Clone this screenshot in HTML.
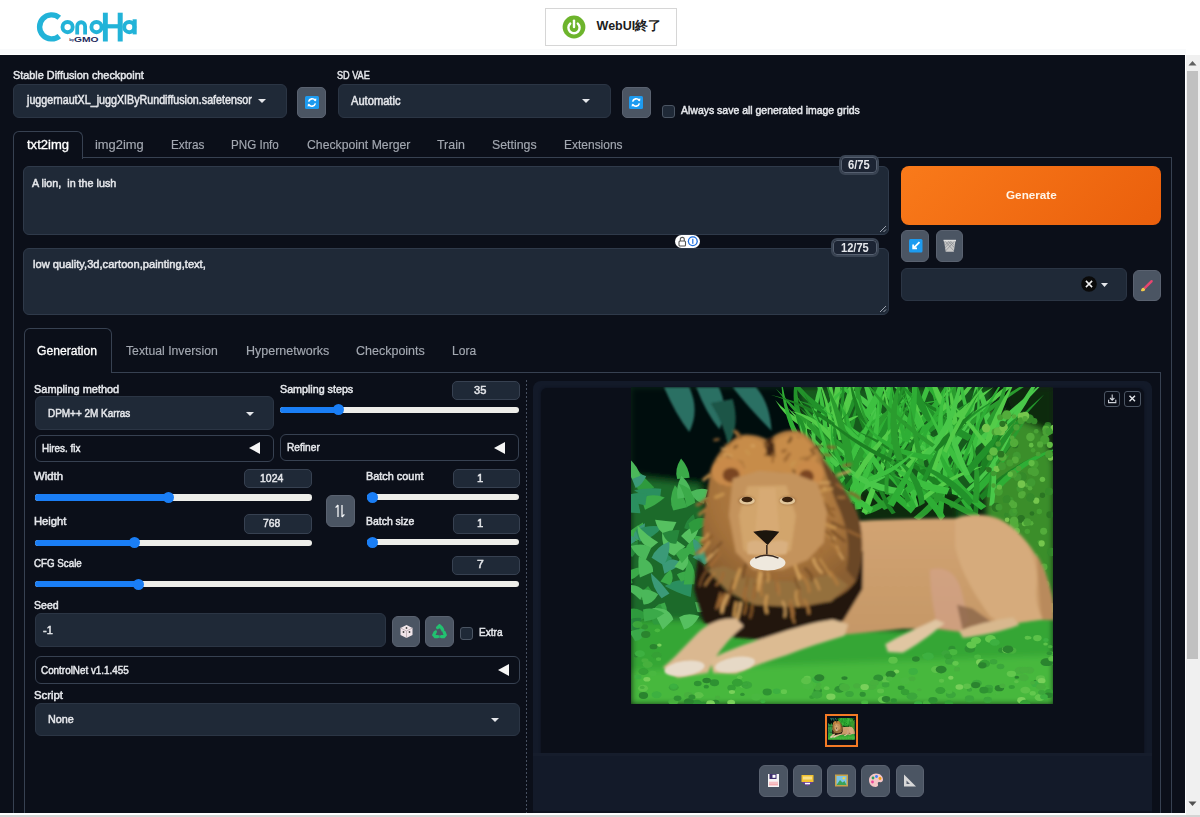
<!DOCTYPE html>
<html><head><meta charset="utf-8"><style>
html,body{margin:0;padding:0;width:1200px;height:817px;overflow:hidden;background:#fff;font-family:"Liberation Sans",sans-serif;}
</style></head><body>
<div style="position:absolute;left:0px;top:0px;width:1200px;height:55px;background:#ffffff;border-radius:0px;"></div>
<div style="position:absolute;left:0px;top:49px;width:1186px;height:5px;background:#f9fafb;border-radius:0px;"></div>
<svg style="position:absolute;left:30px;top:8px;" width="115" height="40" viewBox="0 0 115 40">
<g fill="none" stroke="#22b3d8">
<path d="M 29.3 9.7 A 12 12 0 1 0 29.3 28.1" stroke-width="5.4"/>
<circle cx="37.6" cy="19.1" r="5.1" stroke-width="3.9"/>
<circle cx="66.5" cy="19.1" r="5.1" stroke-width="3.9"/>
<circle cx="99.3" cy="19.1" r="5.1" stroke-width="3.9"/>
</g>
<g fill="#22b3d8">
<path d="M 45.3 26.4 L 45.3 18.2 A 5.85 5.85 0 0 1 57 18.2 L 57 26.4 L 53.2 26.4 L 53.2 18.4 A 2.05 2.05 0 0 0 49.1 18.4 L 49.1 26.4 Z"/>
<rect x="72.9" y="4.7" width="4.9" height="28.8"/>
<rect x="77" y="16.2" width="11" height="4.2"/>
<rect x="87.7" y="4.7" width="5" height="28.8"/>
<rect x="102.6" y="11.3" width="4.1" height="15.1"/>
</g>
<text x="39.3" y="33.4" font-family="Liberation Sans" font-size="4.2" font-weight="700" fill="#1d2a5c">by</text>
<text x="44" y="33.6" font-family="Liberation Sans" font-size="6.8" font-weight="700" fill="#1d2a5c" textLength="24.5" lengthAdjust="spacingAndGlyphs">GMO</text>
</svg>
<div style="position:absolute;left:545px;top:8px;width:132px;height:38px;background:#ffffff;border:1px solid #d6d6d6;box-sizing:border-box;border-radius:0px;"></div>
<svg style="position:absolute;left:562px;top:15px;" width="24" height="24" viewBox="0 0 24 24"><circle cx="12" cy="12" r="11.4" fill="#6db42c"/>
<path d="M 8.2 8.6 A 5.6 5.6 0 1 0 15.8 8.6" fill="none" stroke="#fff" stroke-width="2.4" stroke-linecap="round"/>
<line x1="12" y1="5.6" x2="12" y2="12" stroke="#fff" stroke-width="2.4" stroke-linecap="round"/></svg>
<div style="position:absolute;left:0px;top:55px;width:1185px;height:758px;background:#0b0f19;border-radius:0px;"></div>
<div style="position:absolute;left:1185px;top:55px;width:1px;height:758px;background:#ffffff;border-radius:0px;"></div>
<div style="position:absolute;left:1186px;top:55px;width:14px;height:762px;background:#f0f0f0;border-radius:0px;"></div>
<div style="position:absolute;left:1187px;top:71px;width:11px;height:588px;background:#c1c1c1;border-radius:0px;"></div>
<svg style="position:absolute;left:1187px;top:58px;" width="11" height="10" viewBox="0 0 11 10"><path d="M1.5 7.5 L5.5 3 L9.5 7.5 Z" fill="#606060"/></svg>
<svg style="position:absolute;left:1187px;top:799px;" width="11" height="10" viewBox="0 0 11 10"><path d="M1.5 2.5 L5.5 7 L9.5 2.5 Z" fill="#505050"/></svg>
<div style="position:absolute;left:0px;top:813px;width:1186px;height:2px;background:#ffffff;border-radius:0px;"></div>
<div style="position:absolute;left:0px;top:815px;width:1200px;height:2px;background:#d4d4d4;border-radius:0px;"></div>
<div style="position:absolute;left:12.5px;top:84px;width:274px;height:34px;background:#1f2937;border:1px solid #2b3544;box-sizing:border-box;border-radius:6px;"></div>
<svg style="position:absolute;left:258.0px;top:99.0px;" width="8" height="4" viewBox="0 0 8 4"><path d="M0 0 L8 0 L4.0 4 Z" fill="#e5e7eb"/></svg>
<div style="position:absolute;left:297px;top:87px;width:29px;height:31px;background:#4b5563;border:1px solid #5a6270;box-sizing:border-box;border-radius:5px;"></div>
<svg style="position:absolute;left:304.5px;top:95.5px;" width="14" height="13" viewBox="0 0 14 13"><rect x="0" y="0" width="14" height="13" rx="1.5" fill="#1d9bf0"/>
<path d="M 3.6 5.6 A 3.6 3.6 0 0 1 10.2 4.6" fill="none" stroke="#fff" stroke-width="1.6"/>
<path d="M 10.4 7.4 A 3.6 3.6 0 0 1 3.8 8.4" fill="none" stroke="#fff" stroke-width="1.6"/>
<path d="M 8.6 3.2 L 11.4 2.6 L 11 5.6 Z" fill="#fff"/>
<path d="M 5.4 9.8 L 2.6 10.4 L 3 7.4 Z" fill="#fff"/></svg>
<div style="position:absolute;left:337.5px;top:84px;width:273px;height:34px;background:#1f2937;border:1px solid #2b3544;box-sizing:border-box;border-radius:6px;"></div>
<svg style="position:absolute;left:582.0px;top:99.0px;" width="8" height="4" viewBox="0 0 8 4"><path d="M0 0 L8 0 L4.0 4 Z" fill="#e5e7eb"/></svg>
<div style="position:absolute;left:622px;top:87px;width:28.5px;height:31px;background:#4b5563;border:1px solid #5a6270;box-sizing:border-box;border-radius:5px;"></div>
<svg style="position:absolute;left:629.3px;top:95.5px;" width="14" height="13" viewBox="0 0 14 13"><rect x="0" y="0" width="14" height="13" rx="1.5" fill="#1d9bf0"/>
<path d="M 3.6 5.6 A 3.6 3.6 0 0 1 10.2 4.6" fill="none" stroke="#fff" stroke-width="1.6"/>
<path d="M 10.4 7.4 A 3.6 3.6 0 0 1 3.8 8.4" fill="none" stroke="#fff" stroke-width="1.6"/>
<path d="M 8.6 3.2 L 11.4 2.6 L 11 5.6 Z" fill="#fff"/>
<path d="M 5.4 9.8 L 2.6 10.4 L 3 7.4 Z" fill="#fff"/></svg>
<div style="position:absolute;left:662px;top:105px;width:13px;height:13px;background:#1f2937;border:1px solid #4b5563;box-sizing:border-box;border-radius:3px;"></div>
<div style="position:absolute;left:13px;top:157px;width:1159px;height:1px;background:#374151;border-radius:0px;"></div>
<div style="position:absolute;left:12.5px;top:131px;width:70px;height:28px;background:#0b0f19;border:1px solid #374151;box-sizing:border-box;border-radius:6px;border-bottom:none;border-bottom-left-radius:0;border-bottom-right-radius:0;"></div>
<div style="position:absolute;left:13px;top:157px;width:1px;height:656px;background:#374151;border-radius:0px;"></div>
<div style="position:absolute;left:1171px;top:157px;width:1px;height:656px;background:#374151;border-radius:0px;"></div>
<div style="position:absolute;left:23.3px;top:166px;width:865.5px;height:69px;background:#1f2937;border:1px solid #2f3a4a;box-sizing:border-box;border-radius:6px;"></div>
<svg style="position:absolute;left:876.8px;top:223px;" width="10" height="10" viewBox="0 0 10 10"><path d="M9 3 L3 9 M9 6.5 L6.5 9" stroke="#9ca3af" stroke-width="1"/></svg>
<div style="position:absolute;left:23.3px;top:247.5px;width:865.5px;height:67.3px;background:#1f2937;border:1px solid #2f3a4a;box-sizing:border-box;border-radius:6px;"></div>
<svg style="position:absolute;left:876.8px;top:302.8px;" width="10" height="10" viewBox="0 0 10 10"><path d="M9 3 L3 9 M9 6.5 L6.5 9" stroke="#9ca3af" stroke-width="1"/></svg>
<div style="position:absolute;left:838.8px;top:155.3px;width:40.5px;height:19.7px;background:transparent;border:2px solid #3a4453;box-sizing:border-box;border-radius:6px;"></div>
<div style="position:absolute;left:840.8px;top:157.3px;width:36.5px;height:15.7px;background:#1c2433;border:1px solid #566070;box-sizing:border-box;border-radius:4px;"></div>
<div style="position:absolute;left:830.5px;top:237.5px;width:48.8px;height:19.8px;background:transparent;border:2px solid #3a4453;box-sizing:border-box;border-radius:6px;"></div>
<div style="position:absolute;left:832.5px;top:239.5px;width:44.8px;height:15.8px;background:#1c2433;border:1px solid #566070;box-sizing:border-box;border-radius:4px;"></div>
<div style="position:absolute;left:674.5px;top:235px;width:25.5px;height:12.5px;background:#ffffff;border-radius:6.5px;"></div>
<svg style="position:absolute;left:674.5px;top:235px;" width="26" height="13" viewBox="0 0 26 13"><rect x="4" y="6" width="6.5" height="5" rx="1" fill="none" stroke="#555" stroke-width="1.1"/>
<path d="M5.3 6 V4.4 A2 2 0 0 1 9.3 4.4 V6" fill="none" stroke="#555" stroke-width="1.1"/>
<circle cx="17.8" cy="6.25" r="5" fill="#1d6fe0"/><circle cx="17.8" cy="6.25" r="3.7" fill="#fff"/><rect x="17.2" y="3.8" width="1.2" height="5" fill="#1d6fe0"/></svg>
<div style="position:absolute;left:900.6px;top:166px;width:260.7px;height:58.5px;background:linear-gradient(135deg,#f97a1a,#ea5f0c);border-radius:8px;"></div>
<div style="position:absolute;left:901px;top:230.3px;width:28px;height:31.3px;background:#4b5563;border:1px solid #5a6270;box-sizing:border-box;border-radius:6px;"></div>
<svg style="position:absolute;left:909px;top:239px;" width="13.5" height="13.5" viewBox="0 0 13.5 13.5"><rect width="13.5" height="13.5" rx="1.5" fill="#1d9bf0"/><path d="M10.5 3.2 L4.8 8.8 M4.2 5.6 V9.4 H8" fill="none" stroke="#fff" stroke-width="1.8"/></svg>
<div style="position:absolute;left:935.8px;top:230.3px;width:27.5px;height:31.3px;background:#4b5563;border:1px solid #5a6270;box-sizing:border-box;border-radius:6px;"></div>
<svg style="position:absolute;left:943px;top:239px;" width="13.5" height="13.5" viewBox="0 0 13.5 13.5"><path d="M1 1.5 H12.5 L10.8 12.8 H2.7 Z" fill="#c8c8c8"/>
<path d="M1.5 1.5 L11 12 M12 1.5 L2.5 12 M4.5 1.5 L11.8 9 M9 1.5 L1.8 9 M7 1.5 L2.2 6 M6.5 1.5 L11.3 6" stroke="#7b7f86" stroke-width="0.6"/>
<rect x="0.5" y="0.8" width="12.5" height="1.5" fill="#e0e0e0"/></svg>
<div style="position:absolute;left:901px;top:267.5px;width:225.5px;height:33px;background:#1f2937;border:1px solid #2b3544;box-sizing:border-box;border-radius:6px;"></div>
<svg style="position:absolute;left:1081px;top:276px;" width="16" height="16" viewBox="0 0 16 16"><circle cx="8" cy="8" r="7.8" fill="#0a0a0a"/><path d="M4.9 4.9 L11.1 11.1 M11.1 4.9 L4.9 11.1" stroke="#f0f0f0" stroke-width="1.5"/></svg>
<svg style="position:absolute;left:1100.5px;top:283.0px;" width="7" height="4" viewBox="0 0 7 4"><path d="M0 0 L7 0 L3.5 4 Z" fill="#e5e7eb"/></svg>
<div style="position:absolute;left:1132.5px;top:270px;width:28.5px;height:30.5px;background:#4b5563;border:1px solid #5a6270;box-sizing:border-box;border-radius:6px;"></div>
<svg style="position:absolute;left:1138px;top:277px;" width="17" height="17" viewBox="0 0 17 17"><path d="M5.5 10.5 L12.8 3.2 A1.3 1.3 0 0 1 14.6 5 L7.3 12.3 Z" fill="#e8456f"/><path d="M3 14 C3 11.5 4.5 10.2 5.8 10.8 L7 12 C7.6 13.3 6.2 15 3 14 Z" fill="#f2c94c"/></svg>
<div style="position:absolute;left:24px;top:372px;width:1137px;height:1px;background:#374151;border-radius:0px;"></div>
<div style="position:absolute;left:23.5px;top:328px;width:88px;height:45px;background:#0b0f19;border:1px solid #374151;box-sizing:border-box;border-radius:6px;border-bottom:none;border-bottom-left-radius:0;border-bottom-right-radius:0;"></div>
<div style="position:absolute;left:24px;top:372px;width:1px;height:441px;background:#374151;border-radius:0px;"></div>
<div style="position:absolute;left:1160px;top:372px;width:1px;height:441px;background:#374151;border-radius:0px;"></div>
<div style="position:absolute;left:526px;top:380px;width:1px;height:433px;background:repeating-linear-gradient(to bottom,#475060 0 2px,transparent 2px 4px);"></div>
<div style="position:absolute;left:34.6px;top:396.4px;width:239.7px;height:33.8px;background:#1f2937;border:1px solid #2b3544;box-sizing:border-box;border-radius:6px;"></div>
<svg style="position:absolute;left:246.0px;top:411.79999999999995px;" width="8" height="4" viewBox="0 0 8 4"><path d="M0 0 L8 0 L4.0 4 Z" fill="#e5e7eb"/></svg>
<div style="position:absolute;left:34.6px;top:434.6px;width:239.7px;height:27px;background:transparent;border:1px solid #374151;box-sizing:border-box;border-radius:6px;"></div>
<svg style="position:absolute;left:249px;top:442.1px;" width="11" height="12" viewBox="0 0 11 12"><path d="M11 0 L11 12 L0 6 Z" fill="#f5f5f5"/></svg>
<div style="position:absolute;left:452.4px;top:381px;width:67.9px;height:18.5px;background:#1f2937;border:1px solid #374151;box-sizing:border-box;border-radius:5px;"></div>
<div style="position:absolute;left:280.4px;top:406.5px;width:238.80000000000007px;height:6.4px;background:#eeeeea;border-radius:3.2px;"></div>
<div style="position:absolute;left:280.4px;top:406.5px;width:58.5px;height:6.4px;background:#1a7ef5;border-radius:3.2px;"></div>
<div style="position:absolute;left:333.29999999999995px;top:404.09999999999997px;width:11.2px;height:11.2px;background:#1a7ef5;border-radius:6px;"></div>
<div style="position:absolute;left:280.4px;top:434px;width:239px;height:27.2px;background:transparent;border:1px solid #374151;box-sizing:border-box;border-radius:6px;"></div>
<svg style="position:absolute;left:494.3px;top:441.6px;" width="11" height="12" viewBox="0 0 11 12"><path d="M11 0 L11 12 L0 6 Z" fill="#f5f5f5"/></svg>
<div style="position:absolute;left:243.9px;top:469px;width:68px;height:19.3px;background:#1f2937;border:1px solid #374151;box-sizing:border-box;border-radius:5px;"></div>
<div style="position:absolute;left:34.7px;top:494.2px;width:277.2px;height:6.4px;background:#eeeeea;border-radius:3.2px;"></div>
<div style="position:absolute;left:34.7px;top:494.2px;width:134.10000000000002px;height:6.4px;background:#1a7ef5;border-radius:3.2px;"></div>
<div style="position:absolute;left:163.20000000000002px;top:491.79999999999995px;width:11.2px;height:11.2px;background:#1a7ef5;border-radius:6px;"></div>
<div style="position:absolute;left:243.9px;top:513.8px;width:68px;height:19.8px;background:#1f2937;border:1px solid #374151;box-sizing:border-box;border-radius:5px;"></div>
<div style="position:absolute;left:34.7px;top:539.5px;width:277.2px;height:6.4px;background:#eeeeea;border-radius:3.2px;"></div>
<div style="position:absolute;left:34.7px;top:539.5px;width:100.10000000000001px;height:6.4px;background:#1a7ef5;border-radius:3.2px;"></div>
<div style="position:absolute;left:129.20000000000002px;top:537.1px;width:11.2px;height:11.2px;background:#1a7ef5;border-radius:6px;"></div>
<div style="position:absolute;left:325.5px;top:495.4px;width:29px;height:31.2px;background:#4b5563;border:1px solid #5a6270;box-sizing:border-box;border-radius:6px;"></div>
<svg style="position:absolute;left:333px;top:503px;" width="14" height="16" viewBox="0 0 14 16"><path d="M5 2 V14 M5 2 L2.6 4.6 M9 14 V2 M9 14 L11.4 11.4" stroke="#f3f4f6" stroke-width="1.3" fill="none"/></svg>
<div style="position:absolute;left:452.7px;top:469px;width:67.1px;height:19.2px;background:#1f2937;border:1px solid #374151;box-sizing:border-box;border-radius:5px;"></div>
<div style="position:absolute;left:367.2px;top:494.0px;width:151.50000000000006px;height:6.4px;background:#eeeeea;border-radius:3.2px;"></div>
<div style="position:absolute;left:367.2px;top:494.0px;width:5.300000000000011px;height:6.4px;background:#1a7ef5;border-radius:3.2px;"></div>
<div style="position:absolute;left:366.9px;top:491.59999999999997px;width:11.2px;height:11.2px;background:#1a7ef5;border-radius:6px;"></div>
<div style="position:absolute;left:452.7px;top:514px;width:67.1px;height:19.5px;background:#1f2937;border:1px solid #374151;box-sizing:border-box;border-radius:5px;"></div>
<div style="position:absolute;left:367.2px;top:539.0px;width:151.50000000000006px;height:6.4px;background:#eeeeea;border-radius:3.2px;"></div>
<div style="position:absolute;left:367.2px;top:539.0px;width:5.300000000000011px;height:6.4px;background:#1a7ef5;border-radius:3.2px;"></div>
<div style="position:absolute;left:366.9px;top:536.6px;width:11.2px;height:11.2px;background:#1a7ef5;border-radius:6px;"></div>
<div style="position:absolute;left:452.3px;top:555.5px;width:67.4px;height:19.3px;background:#1f2937;border:1px solid #374151;box-sizing:border-box;border-radius:5px;"></div>
<div style="position:absolute;left:34.7px;top:581.0px;width:484.09999999999997px;height:6.4px;background:#eeeeea;border-radius:3.2px;"></div>
<div style="position:absolute;left:34.7px;top:581.0px;width:103.99999999999999px;height:6.4px;background:#1a7ef5;border-radius:3.2px;"></div>
<div style="position:absolute;left:133.1px;top:578.6px;width:11.2px;height:11.2px;background:#1a7ef5;border-radius:6px;"></div>
<div style="position:absolute;left:34.6px;top:613.3px;width:351px;height:33.8px;background:#1f2937;border:1px solid #2b3544;box-sizing:border-box;border-radius:6px;"></div>
<div style="position:absolute;left:392px;top:615.8px;width:28px;height:31.2px;background:#4b5563;border:1px solid #5a6270;box-sizing:border-box;border-radius:6px;"></div>
<svg style="position:absolute;left:398.5px;top:624px;" width="15" height="15" viewBox="0 0 15 15"><path d="M7.5 1 L13.5 4 V11 L7.5 14 L1.5 11 V4 Z" fill="#f1e6ea"/><path d="M1.5 4 L7.5 7 L13.5 4 M7.5 7 V14" stroke="#b9a9b0" stroke-width="0.8" fill="none"/><circle cx="4.5" cy="8" r="0.9" fill="#444"/><circle cx="10.5" cy="8" r="0.9" fill="#444"/><circle cx="7.5" cy="4" r="0.9" fill="#444"/></svg>
<div style="position:absolute;left:425.1px;top:615.8px;width:29px;height:31.2px;background:#4b5563;border:1px solid #5a6270;box-sizing:border-box;border-radius:6px;"></div>
<svg style="position:absolute;left:432px;top:624px;" width="15" height="15" viewBox="0 0 15 15"><g fill="none" stroke="#22c170" stroke-width="3.2" stroke-linecap="round"><path d="M5.6 3.6 L7.5 1.8 L9.4 3.6 L10.6 5.6"/><path d="M12.2 8.4 L13.2 11 L11.8 12.6 L9.4 12.6"/><path d="M5.6 12.6 L3.2 12.6 L1.8 11 L3 8.4"/></g><path d="M11.2 4.4 L12.8 7.8 L9.4 7.4 Z M7.6 11 L7.6 14.2 L5 12.6 Z M4 5.4 L2 8.6 L5.2 8.2 Z" fill="#22c170"/></svg>
<div style="position:absolute;left:459.5px;top:626.8px;width:13.4px;height:13.3px;background:#1f2937;border:1px solid #4b5563;box-sizing:border-box;border-radius:3px;"></div>
<div style="position:absolute;left:34.6px;top:656.2px;width:485px;height:27.5px;background:transparent;border:1px solid #374151;box-sizing:border-box;border-radius:6px;"></div>
<svg style="position:absolute;left:498.2px;top:663.95px;" width="11" height="12" viewBox="0 0 11 12"><path d="M11 0 L11 12 L0 6 Z" fill="#f5f5f5"/></svg>
<div style="position:absolute;left:34.6px;top:702.5px;width:485px;height:33.8px;background:#1f2937;border:1px solid #2b3544;box-sizing:border-box;border-radius:6px;"></div>
<svg style="position:absolute;left:491.3px;top:717.9px;" width="8" height="4" viewBox="0 0 8 4"><path d="M0 0 L8 0 L4.0 4 Z" fill="#e5e7eb"/></svg>
<div style="position:absolute;left:532.5px;top:381px;width:619px;height:432px;background:#131a29;border-radius:8px;border-bottom-left-radius:0;border-bottom-right-radius:0;"></div>
<div style="position:absolute;left:532.5px;top:810.5px;width:619px;height:2.5px;background:#0e1320;border-radius:0px;"></div>
<div style="position:absolute;left:540.5px;top:387.5px;width:603.5px;height:365px;background:#0b0f19;border-radius:6px;border-bottom-left-radius:0;border-bottom-right-radius:0;box-shadow:0 0 2px 1px #0f1522;"></div>
<div style="position:absolute;left:532.5px;top:752.5px;width:619px;height:3px;background:#161d2c;border-radius:0px;"></div>
<svg style="position:absolute;left:630.7px;top:386.7px" width="422.7" height="317.5" viewBox="0 0 423 317"><defs>
<filter id="b6" x="-10%" y="-10%" width="120%" height="120%"><feGaussianBlur stdDeviation="8"/></filter>
<filter id="b3" x="-10%" y="-10%" width="120%" height="120%"><feGaussianBlur stdDeviation="3"/></filter>
<filter id="b5" x="-10%" y="-10%" width="120%" height="120%"><feGaussianBlur stdDeviation="3.5"/></filter>
<filter id="b2" x="-10%" y="-10%" width="120%" height="120%"><feGaussianBlur stdDeviation="1.5"/></filter>
<linearGradient id="bd" x1="0" y1="0" x2="0" y2="1"><stop offset="0" stop-color="#d2a473"/><stop offset="1" stop-color="#c59766"/></linearGradient>
<radialGradient id="mane" cx="0.5" cy="0.3" r="0.65"><stop offset="0" stop-color="#bf8748"/><stop offset="0.7" stop-color="#a4713a"/><stop offset="1" stop-color="#8a5e30"/></radialGradient>
</defs>
<g transform="scale(0.38843)">
<rect width="1089" height="817" fill="#0b1f0e"/>
<g filter="url(#b6)">
<path d="M0 0 H430 L440 300 L200 250 L0 220 Z" fill="#06110a"/>
<path d="M430 0 H930 L925 250 L860 340 L600 335 L480 260 Z" fill="#155a1a"/>
<path d="M920 60 L1060 90 L1089 200 V560 L1000 520 L915 330 Z" fill="#3a8e2c"/>
<path d="M960 0 H1089 V120 L990 80 Z" fill="#0e2a10"/>
<path d="M0 230 L180 250 L200 420 L175 620 L0 640 Z" fill="#1d6a2c"/>
<path d="M0 600 L300 600 L700 625 L1089 570 V817 H0 Z" fill="#34a634"/>
<path d="M0 730 L1089 690 V817 H0 Z" fill="#46b83e"/>
<path d="M570 260 L850 270 L840 345 L590 345 Z" fill="#0a2a0e"/>
</g>
<g fill="#2c7064" filter="url(#b3)">
<path d="M85 0 Q115 70 150 115 Q178 60 150 0 Z"/>
<path d="M168 0 Q195 70 228 108 Q252 50 226 0 Z"/>
<path d="M262 0 Q305 55 362 112 Q358 40 322 0 Z"/>
<path d="M205 40 Q240 95 250 150 Q282 100 262 30 Z" fill="#1e5446"/>
</g>
<g filter="url(#b2)">
<path d="M86 480 Q110 469 133 453 Q102 434 79 450 Z" fill="#3a9a78"/>
<path d="M168 435 Q170 414 169 391 Q138 401 141 425 Z" fill="#3aaa48"/>
<path d="M158 503 Q126 486 87 512 Q120 531 154 540 Z" fill="#2c8f5e"/>
<path d="M129 501 Q147 496 155 473 Q133 472 118 482 Z" fill="#3aaa48"/>
<path d="M162 371 Q170 351 161 327 Q141 343 137 363 Z" fill="#27863a"/>
<path d="M140 410 Q110 390 81 368 Q75 419 111 434 Z" fill="#56c060"/>
<path d="M58 549 Q60 531 44 512 Q22 530 27 548 Z" fill="#2f9a3c"/>
<path d="M165 403 Q199 415 228 384 Q196 389 162 381 Z" fill="#3aaa48"/>
<path d="M13 397 Q36 384 31 348 Q7 361 -12 378 Z" fill="#3aaa48"/>
<path d="M60 258 Q35 233 11 207 Q-1 253 31 275 Z" fill="#2f9a3c"/>
<path d="M151 233 Q150 207 129 183 Q111 211 119 236 Z" fill="#3aaa48"/>
<path d="M34 526 Q14 500 -24 514 Q3 526 24 548 Z" fill="#4cb85a"/>
<path d="M-8 612 Q19 605 46 589 Q15 560 -11 574 Z" fill="#2f9a3c"/>
<path d="M88 597 Q99 581 87 554 Q58 561 54 581 Z" fill="#3aaa48"/>
<path d="M-2 496 Q21 488 34 462 Q7 464 -14 476 Z" fill="#3aaa48"/>
<path d="M57 475 Q58 447 20 436 Q17 465 23 490 Z" fill="#4cb85a"/>
<path d="M30 397 Q36 375 36 350 Q7 363 6 387 Z" fill="#3a9a78"/>
<path d="M32 559 Q54 561 70 533 Q46 517 25 522 Z" fill="#4cb85a"/>
<path d="M78 261 Q44 258 8 265 Q40 289 75 286 Z" fill="#2c8f5e"/>
<path d="M95 610 Q88 583 75 557 Q43 584 58 611 Z" fill="#2f9a3c"/>
<path d="M100 509 Q114 494 102 469 Q85 483 76 500 Z" fill="#3aaa48"/>
<path d="M14 393 Q3 378 -22 377 Q-19 400 -5 412 Z" fill="#3a9a78"/>
<path d="M22 397 Q56 390 82 359 Q43 353 12 367 Z" fill="#2c8f5e"/>
<path d="M189 425 Q184 402 159 388 Q160 413 169 434 Z" fill="#3a9a78"/>
<path d="M99 531 Q78 502 51 478 Q54 517 79 543 Z" fill="#3a9a78"/>
<path d="M13 636 Q27 622 26 594 Q-6 591 -15 611 Z" fill="#27863a"/>
<path d="M137 624 Q161 618 176 589 Q145 579 124 592 Z" fill="#56c060"/>
<path d="M4 504 Q2 486 -20 475 Q-24 496 -18 512 Z" fill="#2f9a3c"/>
<path d="M150 403 Q172 385 177 352 Q146 362 129 383 Z" fill="#56c060"/>
<path d="M106 440 Q91 427 75 415 Q68 442 87 452 Z" fill="#2c8f5e"/>
<path d="M164 507 Q171 473 147 441 Q138 475 136 508 Z" fill="#3aaa48"/>
<path d="M36 315 Q63 305 87 284 Q53 271 27 287 Z" fill="#3aaa48"/>
<path d="M144 309 Q138 279 113 252 Q95 288 109 317 Z" fill="#3aaa48"/>
<path d="M117 347 Q90 344 62 341 Q72 382 102 379 Z" fill="#56c060"/>
<path d="M11 654 Q32 652 36 621 Q14 622 -5 629 Z" fill="#3aaa48"/>
<path d="M84 458 Q101 433 99 397 Q64 411 53 439 Z" fill="#3a9a78"/>
<path d="M12 259 Q29 252 39 229 Q13 215 -1 228 Z" fill="#3a9a78"/>
<path d="M134 472 Q155 455 144 422 Q127 442 112 462 Z" fill="#56c060"/>
<path d="M41 275 Q13 267 -18 281 Q8 301 37 304 Z" fill="#2c8f5e"/>
<path d="M125 368 Q104 366 81 375 Q94 407 117 402 Z" fill="#27863a"/>
<path d="M3 437 Q18 423 18 396 Q-7 403 -18 420 Z" fill="#27863a"/>
<path d="M200 308 Q234 308 247 270 Q220 281 188 285 Z" fill="#4cb85a"/>
<path d="M156 282 Q157 253 130 228 Q114 259 120 287 Z" fill="#4cb85a"/>
<path d="M131 453 Q147 434 163 416 Q130 407 116 430 Z" fill="#3aaa48"/>
<path d="M171 578 Q193 585 206 556 Q185 555 165 553 Z" fill="#4cb85a"/>
<path d="M156 378 Q184 357 214 346 Q174 325 148 351 Z" fill="#2f9a3c"/>
<path d="M70 399 Q39 381 17 356 Q16 401 50 415 Z" fill="#56c060"/>
<path d="M165 297 Q165 260 123 248 Q139 275 143 309 Z" fill="#3aaa48"/>
<path d="M190 457 Q216 444 201 405 Q179 421 159 438 Z" fill="#3a9a78"/>
<path d="M24 324 Q22 302 11 278 Q-18 298 -9 322 Z" fill="#2c8f5e"/>
<path d="M109 598 Q100 566 55 569 Q67 597 82 624 Z" fill="#56c060"/>
<path d="M34 603 Q61 601 86 582 Q57 564 31 572 Z" fill="#3aaa48"/>
<path d="M24 228 Q17 202 -7 182 Q-8 212 3 236 Z" fill="#4cb85a"/>
<path d="M198 264 Q179 256 154 269 Q166 298 188 299 Z" fill="#4cb85a"/>
<path d="M52 413 Q30 399 -1 409 Q14 438 38 445 Z" fill="#4cb85a"/>
</g>
<g filter="url(#b2)">
<path d="M515 103 Q428 96 372 33 Q418 113 507 117 Z" fill="#52cc48"/>
<path d="M556 90 Q592 12 621 -69 Q580 6 546 85 Z" fill="#22922a"/>
<path d="M699 134 Q783 56 857 -31 Q774 47 691 126 Z" fill="#52cc48"/>
<path d="M672 104 Q690 -7 624 -101 Q674 -4 658 106 Z" fill="#3cc040"/>
<path d="M718 81 Q632 12 583 -84 Q616 24 704 91 Z" fill="#1e8024"/>
<path d="M813 164 Q865 92 942 52 Q852 76 803 151 Z" fill="#22922a"/>
<path d="M831 77 Q701 17 605 -88 Q689 32 821 89 Z" fill="#3cc040"/>
<path d="M511 159 Q505 28 459 -96 Q492 30 500 161 Z" fill="#3cc040"/>
<path d="M844 73 Q826 -20 863 -104 Q805 -23 827 70 Z" fill="#2a9c2e"/>
<path d="M706 151 Q705 31 698 -89 Q686 31 690 151 Z" fill="#3cc040"/>
<path d="M476 153 Q469 5 541 -122 Q457 2 466 150 Z" fill="#48c84a"/>
<path d="M559 167 Q663 57 811 31 Q656 42 553 154 Z" fill="#2fae34"/>
<path d="M784 64 Q708 12 634 -44 Q698 24 776 75 Z" fill="#48c84a"/>
<path d="M748 64 Q791 -65 860 -182 Q777 -72 737 59 Z" fill="#3cc040"/>
<path d="M638 172 Q679 115 663 46 Q668 113 630 170 Z" fill="#2a9c2e"/>
<path d="M842 150 Q901 46 1003 -14 Q889 33 832 139 Z" fill="#48c84a"/>
<path d="M741 105 Q807 51 825 -35 Q791 40 728 97 Z" fill="#2fae34"/>
<path d="M847 113 Q949 20 1058 -66 Q940 8 839 104 Z" fill="#52cc48"/>
<path d="M550 80 Q417 23 374 -113 Q405 33 540 89 Z" fill="#22922a"/>
<path d="M633 138 Q634 58 669 -12 Q620 55 622 135 Z" fill="#52cc48"/>
<path d="M655 76 Q583 -2 481 -38 Q573 12 647 88 Z" fill="#48c84a"/>
<path d="M821 173 Q718 124 618 70 Q712 135 815 183 Z" fill="#52cc48"/>
<path d="M703 153 Q743 108 733 45 Q730 103 692 150 Z" fill="#22922a"/>
<path d="M722 127 Q834 103 907 12 Q825 88 715 115 Z" fill="#2fae34"/>
<path d="M501 135 Q558 101 561 32 Q545 93 491 128 Z" fill="#3cc040"/>
<path d="M868 126 Q892 34 903 -62 Q877 30 856 124 Z" fill="#48c84a"/>
<path d="M749 100 Q712 -14 631 -103 Q694 -4 733 108 Z" fill="#1e8024"/>
<path d="M816 66 Q903 -8 938 -118 Q893 -15 807 60 Z" fill="#52cc48"/>
<path d="M651 172 Q662 109 706 66 Q644 98 636 163 Z" fill="#52cc48"/>
<path d="M890 111 Q824 -33 870 -183 Q813 -32 881 112 Z" fill="#3cc040"/>
<path d="M846 164 Q702 102 630 -34 Q690 115 836 174 Z" fill="#3cc040"/>
<path d="M757 111 Q715 69 679 21 Q705 77 749 118 Z" fill="#1e8024"/>
<path d="M532 111 Q590 6 577 -116 Q575 3 519 109 Z" fill="#52cc48"/>
<path d="M713 185 Q820 121 921 48 Q811 107 706 174 Z" fill="#3cc040"/>
<path d="M610 126 Q672 73 719 5 Q659 60 600 116 Z" fill="#1e8024"/>
<path d="M744 140 Q794 85 816 13 Q780 76 732 132 Z" fill="#3cc040"/>
<path d="M558 144 Q582 92 584 35 Q567 88 546 140 Z" fill="#22922a"/>
<path d="M511 121 Q450 98 404 53 Q443 108 505 129 Z" fill="#52cc48"/>
<path d="M929 116 Q930 23 864 -47 Q912 29 914 121 Z" fill="#48c84a"/>
<path d="M501 79 Q570 -12 641 -102 Q556 -24 489 69 Z" fill="#2a9c2e"/>
<path d="M818 100 Q761 59 712 9 Q746 74 805 113 Z" fill="#2a9c2e"/>
<path d="M722 155 Q798 97 873 37 Q788 83 714 144 Z" fill="#22922a"/>
<path d="M620 124 Q583 20 578 -90 Q565 22 605 126 Z" fill="#2a9c2e"/>
<path d="M831 65 Q760 -30 682 -119 Q745 -19 818 74 Z" fill="#2fae34"/>
<path d="M824 105 Q876 49 933 -0 Q864 35 814 93 Z" fill="#52cc48"/>
<path d="M524 146 Q538 5 558 -136 Q518 2 507 144 Z" fill="#52cc48"/>
<path d="M845 93 Q788 17 763 -74 Q769 25 830 100 Z" fill="#52cc48"/>
<path d="M638 101 Q632 6 573 -72 Q613 12 622 106 Z" fill="#48c84a"/>
<path d="M637 103 Q580 3 477 -51 Q571 12 629 111 Z" fill="#3cc040"/>
<path d="M876 89 Q775 58 691 -4 Q769 69 872 98 Z" fill="#1e8024"/>
<path d="M478 160 Q415 59 431 -56 Q396 62 463 162 Z" fill="#22922a"/>
<path d="M503 154 Q537 96 597 69 Q526 82 494 143 Z" fill="#52cc48"/>
<path d="M849 113 Q893 22 936 -70 Q880 15 838 108 Z" fill="#1e8024"/>
<path d="M631 154 Q621 85 574 31 Q606 91 618 159 Z" fill="#48c84a"/>
<path d="M799 169 Q708 51 738 -92 Q694 54 787 171 Z" fill="#52cc48"/>
<path d="M644 70 Q659 -38 620 -141 Q643 -37 631 71 Z" fill="#2fae34"/>
<path d="M842 110 Q840 40 812 -25 Q827 42 832 112 Z" fill="#52cc48"/>
<path d="M790 96 Q721 6 729 -105 Q700 11 773 101 Z" fill="#22922a"/>
<path d="M613 77 Q687 -34 688 -170 Q668 -41 597 71 Z" fill="#3cc040"/>
<path d="M472 121 Q507 41 573 -15 Q497 33 464 114 Z" fill="#3cc040"/>
<path d="M579 280 Q589 204 602 129 Q569 200 562 276 Z" fill="#3cc040"/>
<path d="M894 328 Q903 180 968 49 Q887 176 882 324 Z" fill="#1e8024"/>
<path d="M883 319 Q819 229 802 121 Q804 234 871 323 Z" fill="#2fae34"/>
<path d="M490 333 Q568 279 598 185 Q553 267 477 323 Z" fill="#1e8024"/>
<path d="M834 138 Q938 43 1058 -30 Q929 30 826 127 Z" fill="#2a9c2e"/>
<path d="M842 279 Q836 205 867 141 Q817 201 827 275 Z" fill="#3cc040"/>
<path d="M891 294 Q801 206 701 130 Q792 216 883 302 Z" fill="#1e8024"/>
<path d="M533 285 Q392 271 291 175 Q387 282 529 294 Z" fill="#2a9c2e"/>
<path d="M632 256 Q705 120 642 -23 Q689 119 619 255 Z" fill="#52cc48"/>
<path d="M741 306 Q707 178 624 74 Q695 184 731 311 Z" fill="#48c84a"/>
<path d="M830 212 Q765 137 664 122 Q758 148 825 221 Z" fill="#48c84a"/>
<path d="M611 182 Q522 162 469 92 Q512 177 602 195 Z" fill="#48c84a"/>
<path d="M503 154 Q585 58 582 -71 Q565 50 487 148 Z" fill="#52cc48"/>
<path d="M773 121 Q695 16 700 -113 Q681 20 762 124 Z" fill="#3cc040"/>
<path d="M826 312 Q924 235 995 131 Q916 227 819 305 Z" fill="#1e8024"/>
<path d="M905 291 Q997 200 1116 152 Q987 184 897 279 Z" fill="#1e8024"/>
<path d="M560 278 Q525 136 444 13 Q511 142 548 283 Z" fill="#1e8024"/>
<path d="M675 198 Q601 108 491 62 Q590 122 665 210 Z" fill="#3cc040"/>
<path d="M548 212 Q587 96 697 46 Q578 88 541 205 Z" fill="#2fae34"/>
<path d="M929 219 Q981 149 1024 72 Q968 140 919 212 Z" fill="#2a9c2e"/>
<path d="M771 294 Q841 234 885 151 Q825 220 758 283 Z" fill="#22922a"/>
<path d="M808 252 Q770 127 697 17 Q754 134 795 258 Z" fill="#3cc040"/>
<path d="M475 190 Q403 93 387 -26 Q388 99 462 195 Z" fill="#2fae34"/>
<path d="M621 178 Q557 62 424 32 Q545 77 611 191 Z" fill="#22922a"/>
<path d="M723 198 Q754 129 717 61 Q741 129 712 198 Z" fill="#52cc48"/>
<path d="M933 282 Q1006 195 1110 154 Q996 180 925 269 Z" fill="#2fae34"/>
<path d="M504 175 Q570 63 540 -65 Q558 61 494 173 Z" fill="#22922a"/>
<path d="M594 313 Q587 189 557 67 Q566 191 577 315 Z" fill="#3cc040"/>
<path d="M729 240 Q615 143 580 -0 Q602 151 718 246 Z" fill="#2a9c2e"/>
<path d="M905 124 Q970 54 971 -43 Q954 47 892 118 Z" fill="#2a9c2e"/>
<path d="M552 234 Q520 179 452 174 Q509 195 543 247 Z" fill="#3cc040"/>
<path d="M936 154 Q1026 52 1076 -77 Q1011 42 923 146 Z" fill="#48c84a"/>
<path d="M825 154 Q818 96 795 41 Q804 99 813 156 Z" fill="#1e8024"/>
<path d="M546 232 Q517 122 430 47 Q508 128 538 237 Z" fill="#22922a"/>
<path d="M806 292 Q776 194 754 94 Q760 197 793 295 Z" fill="#2fae34"/>
<path d="M760 276 Q827 169 891 60 Q810 158 746 267 Z" fill="#48c84a"/>
<path d="M892 278 Q939 230 974 173 Q923 217 879 266 Z" fill="#2fae34"/>
<path d="M710 220 Q784 176 841 110 Q776 165 703 211 Z" fill="#2fae34"/>
<path d="M671 199 Q591 92 561 -36 Q573 100 656 206 Z" fill="#1e8024"/>
<path d="M862 179 Q975 84 1075 -25 Q963 70 852 168 Z" fill="#48c84a"/>
<path d="M581 185 Q582 105 536 37 Q561 111 564 190 Z" fill="#2fae34"/>
<path d="M875 202 Q914 96 891 -15 Q900 95 864 201 Z" fill="#3cc040"/>
<path d="M732 312 Q636 223 521 158 Q624 239 721 325 Z" fill="#2fae34"/>
<path d="M677 187 Q726 149 729 85 Q716 143 669 183 Z" fill="#3cc040"/>
<path d="M849 206 Q810 102 772 -2 Q796 107 838 209 Z" fill="#2fae34"/>
<path d="M612 187 Q494 124 421 13 Q483 135 603 196 Z" fill="#2a9c2e"/>
<path d="M604 329 Q681 307 713 230 Q668 292 594 316 Z" fill="#2a9c2e"/>
<path d="M474 263 Q492 151 560 64 Q476 144 461 257 Z" fill="#1e8024"/>
<path d="M879 124 Q766 67 681 -25 Q753 83 868 138 Z" fill="#22922a"/>
<path d="M664 311 Q554 197 551 42 Q540 203 652 316 Z" fill="#2a9c2e"/>
<path d="M572 191 Q607 126 632 56 Q590 118 558 184 Z" fill="#3cc040"/>
<path d="M604 185 Q649 86 731 17 Q636 75 593 176 Z" fill="#2fae34"/>
<path d="M608 327 Q637 250 660 172 Q620 244 594 321 Z" fill="#52cc48"/>
<path d="M500 316 Q367 259 264 161 Q358 273 492 328 Z" fill="#2fae34"/>
<path d="M581 292 Q500 264 446 199 Q492 274 575 301 Z" fill="#2a9c2e"/>
<path d="M811 131 Q877 94 889 16 Q863 83 799 122 Z" fill="#2fae34"/>
<path d="M739 126 Q793 95 828 43 Q782 82 730 115 Z" fill="#2fae34"/>
<path d="M636 270 Q710 195 752 97 Q694 183 622 260 Z" fill="#1e8024"/>
<path d="M927 284 Q948 174 937 61 Q935 173 917 283 Z" fill="#2a9c2e"/>
<path d="M577 221 Q627 98 719 4 Q612 87 564 212 Z" fill="#2a9c2e"/>
<path d="M723 309 Q759 236 752 152 Q742 232 709 306 Z" fill="#3cc040"/>
<path d="M735 307 Q706 240 637 208 Q693 252 724 317 Z" fill="#2fae34"/>
<path d="M703 285 Q748 249 780 198 Q734 234 691 273 Z" fill="#2fae34"/>
<path d="M721 291 Q694 225 638 180 Q682 234 710 298 Z" fill="#22922a"/>
<path d="M849 285 Q958 207 995 76 Q949 200 841 280 Z" fill="#48c84a"/>
<path d="M546 171 Q459 87 373 3 Q447 99 535 181 Z" fill="#2a9c2e"/>
<path d="M613 225 Q694 129 713 2 Q683 123 604 221 Z" fill="#2fae34"/>
<path d="M746 152 Q793 58 851 -29 Q784 53 738 147 Z" fill="#2fae34"/>
<path d="M716 141 Q748 45 731 -58 Q726 42 698 139 Z" fill="#2fae34"/>
<path d="M804 336 Q805 251 838 174 Q789 247 790 333 Z" fill="#2fae34"/>
<path d="M682 323 Q628 249 624 159 Q616 253 672 327 Z" fill="#1e8024"/>
<path d="M742 343 Q839 273 845 151 Q821 263 728 335 Z" fill="#2a9c2e"/>
<path d="M548 316 Q599 257 668 225 Q588 241 539 303 Z" fill="#48c84a"/>
<path d="M630 161 Q645 92 638 20 Q630 90 617 160 Z" fill="#3cc040"/>
<path d="M825 224 Q790 110 811 -5 Q770 111 809 224 Z" fill="#3cc040"/>
<path d="M647 139 Q686 59 714 -27 Q671 52 633 133 Z" fill="#22922a"/>
<path d="M814 234 Q816 116 843 2 Q803 114 803 232 Z" fill="#3cc040"/>
<path d="M540 323 Q455 217 452 84 Q436 223 524 329 Z" fill="#52cc48"/>
<path d="M935 304 Q957 164 897 34 Q943 166 923 305 Z" fill="#48c84a"/>
<path d="M709 131 Q693 55 667 -19 Q680 58 699 133 Z" fill="#2fae34"/>
<path d="M525 165 Q526 62 479 -31 Q514 65 515 167 Z" fill="#52cc48"/>
<path d="M590 283 Q619 220 632 151 Q600 213 575 277 Z" fill="#3cc040"/>
<path d="M677 150 Q667 61 677 -27 Q653 61 665 150 Z" fill="#2fae34"/>
<path d="M564 125 Q477 43 359 19 Q472 53 559 133 Z" fill="#1e8024"/>
<path d="M813 259 Q714 163 583 113 Q704 178 805 272 Z" fill="#1e8024"/>
<path d="M916 306 Q816 235 779 121 Q800 246 902 316 Z" fill="#2fae34"/>
<path d="M695 233 Q747 164 827 134 Q739 152 688 223 Z" fill="#52cc48"/>
<path d="M654 220 Q595 113 487 52 Q583 124 644 229 Z" fill="#3cc040"/>
<path d="M894 297 Q907 216 878 138 Q890 217 880 297 Z" fill="#2a9c2e"/>
<path d="M476 204 Q452 148 434 90 Q439 152 465 208 Z" fill="#48c84a"/>
<path d="M862 188 Q909 56 989 -60 Q900 51 854 184 Z" fill="#2fae34"/>
<path d="M885 241 Q814 145 757 41 Q799 154 873 248 Z" fill="#3cc040"/>
<path d="M624 311 Q526 236 407 198 Q517 252 617 324 Z" fill="#3cc040"/>
<path d="M758 209 Q740 130 720 51 Q724 133 745 212 Z" fill="#2a9c2e"/>
<path d="M919 208 Q982 105 1065 18 Q971 96 910 201 Z" fill="#22922a"/>
<path d="M923 149 Q876 89 821 35 Q866 97 915 156 Z" fill="#52cc48"/>
<path d="M899 329 Q805 276 703 243 Q797 292 892 342 Z" fill="#2a9c2e"/>
<path d="M758 247 Q815 100 952 26 Q805 91 749 240 Z" fill="#22922a"/>
<path d="M476 292 Q444 199 355 151 Q428 212 462 303 Z" fill="#3cc040"/>
<path d="M541 257 Q525 148 529 40 Q510 149 529 257 Z" fill="#22922a"/>
<path d="M779 231 Q810 147 831 60 Q798 143 769 228 Z" fill="#52cc48"/>
<path d="M523 129 Q482 73 412 61 Q474 85 516 139 Z" fill="#52cc48"/>
<path d="M705 262 Q582 247 504 154 Q572 264 697 277 Z" fill="#48c84a"/>
<path d="M585 236 Q633 157 693 86 Q620 146 574 227 Z" fill="#52cc48"/>
<path d="M787 166 Q845 119 887 56 Q831 105 775 155 Z" fill="#1e8024"/>
<path d="M663 277 Q661 137 730 18 Q649 134 653 274 Z" fill="#2a9c2e"/>
<path d="M759 187 Q870 69 850 -94 Q854 64 745 182 Z" fill="#48c84a"/>
<path d="M923 152 Q953 62 993 -24 Q937 55 909 146 Z" fill="#52cc48"/>
<path d="M783 147 Q656 62 570 -63 Q648 70 776 154 Z" fill="#2a9c2e"/>
<path d="M809 332 Q765 251 673 226 Q752 266 798 345 Z" fill="#2fae34"/>
<path d="M546 134 Q513 -0 502 -138 Q499 2 535 136 Z" fill="#52cc48"/>
<path d="M753 293 Q825 233 912 201 Q819 221 748 284 Z" fill="#52cc48"/>
<path d="M874 223 Q943 140 1014 59 Q928 126 861 212 Z" fill="#22922a"/>
<path d="M538 311 Q463 228 423 125 Q448 237 525 318 Z" fill="#22922a"/>
<path d="M572 225 Q511 160 519 74 Q500 164 562 228 Z" fill="#2fae34"/>
<path d="M821 259 Q733 243 661 192 Q723 263 814 276 Z" fill="#3cc040"/>
<path d="M874 225 Q813 103 816 -32 Q797 106 861 228 Z" fill="#48c84a"/>
<path d="M757 298 Q750 216 672 178 Q733 226 743 306 Z" fill="#22922a"/>
<path d="M676 308 Q714 247 737 178 Q696 237 661 299 Z" fill="#2fae34"/>
<path d="M780 174 Q661 168 588 77 Q653 182 774 186 Z" fill="#2fae34"/>
<path d="M561 326 Q488 238 371 237 Q482 250 556 336 Z" fill="#2a9c2e"/>
<path d="M702 188 Q664 67 708 -48 Q643 66 684 187 Z" fill="#2a9c2e"/>
<path d="M911 211 Q952 143 976 67 Q942 138 903 206 Z" fill="#1e8024"/>
<path d="M575 203 Q557 86 498 -19 Q536 92 558 208 Z" fill="#2a9c2e"/>
<path d="M674 185 Q567 135 477 58 Q560 144 669 193 Z" fill="#1e8024"/>
<path d="M813 169 Q855 70 919 -17 Q844 63 804 164 Z" fill="#52cc48"/>
<path d="M538 198 Q497 157 458 116 Q485 168 528 206 Z" fill="#48c84a"/>
<path d="M614 243 Q688 221 737 159 Q681 209 608 233 Z" fill="#3cc040"/>
<path d="M518 336 Q536 185 464 48 Q520 187 504 338 Z" fill="#3cc040"/>
<path d="M882 292 Q821 217 725 195 Q810 234 872 306 Z" fill="#22922a"/>
</g>
<g filter="url(#b2)">
<circle cx="1006" cy="75" r="10" fill="#74c64e"/>
<circle cx="1074" cy="98" r="9" fill="#2a7424"/>
<circle cx="1069" cy="507" r="9" fill="#52ac3a"/>
<circle cx="1044" cy="292" r="8" fill="#74c64e"/>
<circle cx="1002" cy="261" r="9" fill="#3f9a30"/>
<circle cx="1005" cy="86" r="9" fill="#44a032"/>
<circle cx="964" cy="94" r="5" fill="#2a7424"/>
<circle cx="941" cy="309" r="12" fill="#2a7424"/>
<circle cx="948" cy="309" r="9" fill="#3f9a30"/>
<circle cx="1066" cy="135" r="12" fill="#44a032"/>
<circle cx="934" cy="165" r="11" fill="#62bc44"/>
<circle cx="1059" cy="477" r="9" fill="#4aa236"/>
<circle cx="1039" cy="198" r="11" fill="#44a032"/>
<circle cx="951" cy="77" r="8" fill="#44a032"/>
<circle cx="964" cy="398" r="6" fill="#44a032"/>
<circle cx="1052" cy="320" r="7" fill="#44a032"/>
<circle cx="1064" cy="463" r="9" fill="#52ac3a"/>
<circle cx="1054" cy="147" r="8" fill="#52ac3a"/>
<circle cx="1081" cy="182" r="7" fill="#74c64e"/>
<circle cx="947" cy="268" r="11" fill="#44a032"/>
<circle cx="1072" cy="107" r="12" fill="#348a2a"/>
<circle cx="1008" cy="231" r="12" fill="#348a2a"/>
<circle cx="1012" cy="577" r="8" fill="#2a7424"/>
<circle cx="1037" cy="501" r="12" fill="#348a2a"/>
<circle cx="1036" cy="162" r="6" fill="#44a032"/>
<circle cx="922" cy="212" r="7" fill="#2a7424"/>
<circle cx="1021" cy="252" r="6" fill="#52ac3a"/>
<circle cx="1035" cy="445" r="8" fill="#4aa236"/>
<circle cx="1049" cy="172" r="6" fill="#4aa236"/>
<circle cx="986" cy="303" r="9" fill="#52ac3a"/>
<circle cx="956" cy="365" r="7" fill="#4aa236"/>
<circle cx="1081" cy="110" r="10" fill="#348a2a"/>
<circle cx="1077" cy="268" r="10" fill="#348a2a"/>
<circle cx="993" cy="103" r="8" fill="#4aa236"/>
<circle cx="1017" cy="406" r="7" fill="#3f9a30"/>
<circle cx="1032" cy="195" r="8" fill="#62bc44"/>
<circle cx="1018" cy="512" r="8" fill="#4aa236"/>
<circle cx="1063" cy="371" r="9" fill="#52ac3a"/>
<circle cx="994" cy="177" r="11" fill="#3f9a30"/>
<circle cx="1031" cy="245" r="11" fill="#3f9a30"/>
<circle cx="1031" cy="149" r="6" fill="#62bc44"/>
<circle cx="996" cy="231" r="10" fill="#3f9a30"/>
<circle cx="1084" cy="568" r="12" fill="#74c64e"/>
<circle cx="990" cy="187" r="9" fill="#52ac3a"/>
<circle cx="1089" cy="104" r="8" fill="#74c64e"/>
<circle cx="1053" cy="545" r="9" fill="#348a2a"/>
<circle cx="1002" cy="493" r="9" fill="#52ac3a"/>
<circle cx="1044" cy="113" r="6" fill="#4aa236"/>
<circle cx="1030" cy="565" r="8" fill="#52ac3a"/>
<circle cx="990" cy="149" r="8" fill="#2a7424"/>
<circle cx="1079" cy="527" r="5" fill="#2a7424"/>
<circle cx="987" cy="356" r="12" fill="#52ac3a"/>
<circle cx="967" cy="329" r="6" fill="#348a2a"/>
<circle cx="938" cy="115" r="9" fill="#4aa236"/>
<circle cx="976" cy="195" r="9" fill="#44a032"/>
<circle cx="924" cy="181" r="8" fill="#52ac3a"/>
<circle cx="1006" cy="277" r="9" fill="#52ac3a"/>
<circle cx="987" cy="75" r="6" fill="#52ac3a"/>
<circle cx="1043" cy="433" r="6" fill="#3f9a30"/>
<circle cx="985" cy="322" r="11" fill="#3f9a30"/>
<circle cx="983" cy="223" r="7" fill="#52ac3a"/>
<circle cx="1029" cy="284" r="11" fill="#348a2a"/>
<circle cx="1029" cy="522" r="12" fill="#52ac3a"/>
<circle cx="984" cy="223" r="10" fill="#4aa236"/>
<circle cx="953" cy="113" r="11" fill="#74c64e"/>
<circle cx="977" cy="290" r="8" fill="#3f9a30"/>
<circle cx="969" cy="341" r="6" fill="#74c64e"/>
<circle cx="1010" cy="274" r="7" fill="#52ac3a"/>
<circle cx="1039" cy="87" r="8" fill="#348a2a"/>
<circle cx="1005" cy="339" r="10" fill="#2a7424"/>
<circle cx="916" cy="373" r="12" fill="#2a7424"/>
<circle cx="1083" cy="424" r="11" fill="#348a2a"/>
<circle cx="1021" cy="371" r="7" fill="#44a032"/>
<circle cx="952" cy="371" r="11" fill="#74c64e"/>
<circle cx="1028" cy="260" r="6" fill="#52ac3a"/>
<circle cx="1060" cy="237" r="7" fill="#62bc44"/>
<circle cx="1052" cy="398" r="5" fill="#44a032"/>
<circle cx="923" cy="389" r="9" fill="#2a7424"/>
<circle cx="1026" cy="81" r="12" fill="#348a2a"/>
<circle cx="1016" cy="73" r="10" fill="#74c64e"/>
<circle cx="973" cy="389" r="11" fill="#52ac3a"/>
<circle cx="945" cy="113" r="10" fill="#62bc44"/>
<circle cx="981" cy="298" r="8" fill="#52ac3a"/>
<circle cx="1042" cy="496" r="12" fill="#2a7424"/>
<circle cx="1031" cy="350" r="6" fill="#52ac3a"/>
<circle cx="1029" cy="128" r="11" fill="#52ac3a"/>
<circle cx="987" cy="344" r="11" fill="#52ac3a"/>
<circle cx="942" cy="210" r="8" fill="#74c64e"/>
<circle cx="1077" cy="172" r="10" fill="#44a032"/>
<circle cx="1001" cy="422" r="8" fill="#44a032"/>
<circle cx="944" cy="369" r="6" fill="#2a7424"/>
<circle cx="1058" cy="402" r="8" fill="#74c64e"/>
<circle cx="994" cy="370" r="8" fill="#62bc44"/>
<circle cx="956" cy="203" r="10" fill="#3f9a30"/>
<circle cx="960" cy="103" r="11" fill="#74c64e"/>
<circle cx="957" cy="179" r="11" fill="#52ac3a"/>
<circle cx="1012" cy="568" r="11" fill="#44a032"/>
<circle cx="982" cy="130" r="6" fill="#52ac3a"/>
<circle cx="1033" cy="325" r="6" fill="#2a7424"/>
<circle cx="1014" cy="351" r="7" fill="#62bc44"/>
<circle cx="977" cy="224" r="7" fill="#62bc44"/>
<circle cx="953" cy="172" r="9" fill="#2a7424"/>
<circle cx="1016" cy="529" r="11" fill="#2a7424"/>
<circle cx="1040" cy="218" r="11" fill="#4aa236"/>
<circle cx="934" cy="253" r="6" fill="#4aa236"/>
<circle cx="1031" cy="216" r="9" fill="#4aa236"/>
<circle cx="999" cy="209" r="7" fill="#4aa236"/>
<circle cx="1079" cy="148" r="8" fill="#62bc44"/>
<circle cx="1021" cy="347" r="10" fill="#4aa236"/>
<circle cx="968" cy="288" r="10" fill="#348a2a"/>
<circle cx="999" cy="420" r="7" fill="#348a2a"/>
<circle cx="1079" cy="328" r="9" fill="#2a7424"/>
<circle cx="1069" cy="108" r="9" fill="#52ac3a"/>
<circle cx="968" cy="71" r="12" fill="#52ac3a"/>
<circle cx="949" cy="257" r="7" fill="#62bc44"/>
<circle cx="926" cy="410" r="5" fill="#3f9a30"/>
<circle cx="987" cy="143" r="11" fill="#52ac3a"/>
<circle cx="991" cy="417" r="6" fill="#2a7424"/>
<circle cx="1022" cy="542" r="11" fill="#52ac3a"/>
<circle cx="988" cy="318" r="6" fill="#44a032"/>
<circle cx="1071" cy="115" r="11" fill="#4aa236"/>
<circle cx="1078" cy="568" r="12" fill="#62bc44"/>
<circle cx="1064" cy="547" r="5" fill="#44a032"/>
<circle cx="1053" cy="578" r="9" fill="#2a7424"/>
<circle cx="1077" cy="114" r="9" fill="#3f9a30"/>
<circle cx="934" cy="222" r="7" fill="#3f9a30"/>
<circle cx="987" cy="146" r="6" fill="#52ac3a"/>
<circle cx="915" cy="105" r="11" fill="#74c64e"/>
<circle cx="1060" cy="278" r="7" fill="#2a7424"/>
<circle cx="957" cy="94" r="8" fill="#2a7424"/>
<circle cx="1006" cy="249" r="10" fill="#74c64e"/>
<circle cx="946" cy="146" r="7" fill="#44a032"/>
<circle cx="947" cy="416" r="9" fill="#4aa236"/>
<circle cx="1015" cy="81" r="7" fill="#52ac3a"/>
</g>
<g filter="url(#b5)">
<path d="M520 350 C600 342 700 338 835 338 C860 328 910 322 950 340 C1000 365 1045 420 1065 480 C1075 520 1085 545 1089 560 V598 L1040 600 L960 612 L900 626 L850 630 L780 622 L700 622 L600 632 L520 640 L525 560 L565 490 L588 410 Z" fill="url(#bd)"/>
<path d="M835 340 C880 325 940 330 985 365 C1030 405 1050 460 1045 510 C1040 545 1050 575 1060 598 L960 612 L925 590 C890 540 850 480 835 410 Z" fill="#d6ab7c"/>
<path d="M1045 430 C1070 470 1085 530 1089 560 V600 L1060 598 C1052 560 1050 500 1045 430 Z" fill="#b98a5c"/>
<path d="M770 470 C800 460 835 470 850 520 L870 600 L850 628 L790 620 C780 580 770 520 770 470 Z" fill="#d4a48e" opacity="0.6"/>
<path d="M840 560 L880 570 L930 605 L900 622 L855 628 Z" fill="#8a6448" opacity="0.8"/>
<path d="M655 662 C690 640 740 620 785 598 L808 608 C770 640 730 668 700 684 L662 682 Z" fill="#e0c6a2"/>
<path d="M845 628 C880 612 930 600 985 592 L1000 612 C960 628 900 640 855 645 Z" fill="#d8b88e"/>
<path d="M172 440 L240 520 L300 560 L420 560 L520 520 L570 470 L598 420 L596 520 L548 600 L482 642 L380 654 L260 644 L188 606 L162 520 Z" fill="#22170f"/>
<path d="M205 212 C215 180 245 140 280 124 C300 118 330 122 355 138 C370 118 400 106 432 112 C465 125 485 160 500 190 C530 230 570 290 588 340 C600 390 600 450 578 500 C550 540 500 560 420 566 L320 560 C280 548 240 520 210 480 C185 440 178 380 190 320 Z" fill="url(#mane)"/>
<path d="M215 208 C240 160 270 132 290 128 C320 128 340 140 355 150 C375 128 405 116 432 120 C460 135 475 160 480 180 L456 232 L380 216 L290 226 Z" fill="#c78c48"/>
<path d="M345 140 C352 130 362 126 368 130 L372 180 L350 176 Z" fill="#4a2c16"/>
<path d="M488 178 C520 215 560 270 584 326 C600 380 598 440 580 500 L555 470 C565 420 560 360 530 300 C515 260 500 220 488 178 Z" fill="#6a4628"/>
<path d="M196 470 L250 527 L320 560 L420 566 L516 552 L560 510 L520 480 L420 500 L320 495 L240 460 Z" fill="#94703e"/>
<g fill="none" stroke-linecap="round" filter="url(#b2)">
<path d="M302 486 Q298 509 293 533" stroke="#8a5a28" stroke-width="4.3"/>
<path d="M364 176 Q363 173 366 170" stroke="#8a5a28" stroke-width="5.4"/>
<path d="M546 202 Q562 200 566 198" stroke="#a06a34" stroke-width="5.4"/>
<path d="M393 166 Q387 164 398 162" stroke="#a06a34" stroke-width="7.9"/>
<path d="M459 261 Q474 268 472 276" stroke="#d6a460" stroke-width="4.6"/>
<path d="M412 549 Q409 577 421 606" stroke="#b07a3e" stroke-width="4.5"/>
<path d="M403 176 Q409 174 408 171" stroke="#a06a34" stroke-width="7.5"/>
<path d="M198 378 Q199 386 181 394" stroke="#c99550" stroke-width="6.9"/>
<path d="M292 205 Q288 203 283 202" stroke="#b07a3e" stroke-width="6.2"/>
<path d="M478 404 Q485 414 492 424" stroke="#a06a34" stroke-width="4.6"/>
<path d="M264 498 Q258 517 253 537" stroke="#7a5026" stroke-width="6.4"/>
<path d="M449 182 Q445 186 460 190" stroke="#a06a34" stroke-width="7.1"/>
<path d="M424 455 Q423 472 440 490" stroke="#c99550" stroke-width="5.7"/>
<path d="M534 283 Q532 284 550 284" stroke="#b07a3e" stroke-width="5.2"/>
<path d="M496 370 Q504 380 523 390" stroke="#d6a460" stroke-width="7.0"/>
<path d="M420 453 Q428 474 434 494" stroke="#d6a460" stroke-width="5.8"/>
<path d="M243 531 Q231 552 233 572" stroke="#a06a34" stroke-width="6.0"/>
<path d="M503 315 Q513 323 522 332" stroke="#8a5a28" stroke-width="5.6"/>
<path d="M305 172 Q298 167 297 163" stroke="#c99550" stroke-width="6.2"/>
<path d="M191 315 Q183 322 176 328" stroke="#b07a3e" stroke-width="7.4"/>
<path d="M237 275 Q230 279 218 283" stroke="#c99550" stroke-width="7.9"/>
<path d="M320 504 Q320 523 317 541" stroke="#8a5a28" stroke-width="5.6"/>
<path d="M489 368 Q503 376 516 383" stroke="#b07a3e" stroke-width="7.8"/>
<path d="M298 546 Q298 564 292 583" stroke="#8a5a28" stroke-width="6.8"/>
<path d="M208 383 Q200 392 180 401" stroke="#8a5a28" stroke-width="6.8"/>
<path d="M428 127 Q436 129 435 130" stroke="#b07a3e" stroke-width="4.2"/>
<path d="M258 179 Q259 176 242 174" stroke="#d6a460" stroke-width="6.6"/>
<path d="M530 410 Q534 426 546 442" stroke="#d6a460" stroke-width="4.7"/>
<path d="M282 129 Q281 121 270 113" stroke="#8a5a28" stroke-width="6.7"/>
<path d="M200 398 Q191 412 179 427" stroke="#c99550" stroke-width="7.8"/>
<path d="M240 190 Q241 187 225 184" stroke="#c99550" stroke-width="6.0"/>
<path d="M496 310 Q510 312 524 314" stroke="#8a5a28" stroke-width="5.3"/>
<path d="M332 476 Q326 500 328 523" stroke="#c99550" stroke-width="7.7"/>
<path d="M481 246 Q501 245 511 245" stroke="#d6a460" stroke-width="5.3"/>
<path d="M320 513 Q318 528 315 544" stroke="#a06a34" stroke-width="5.9"/>
<path d="M347 175 Q345 174 346 173" stroke="#8a5a28" stroke-width="5.6"/>
<path d="M231 530 Q226 550 220 570" stroke="#a06a34" stroke-width="4.9"/>
<path d="M533 226 Q547 221 563 216" stroke="#d6a460" stroke-width="6.7"/>
<path d="M366 140 Q369 138 368 136" stroke="#b07a3e" stroke-width="5.7"/>
<path d="M447 548 Q458 565 458 582" stroke="#b07a3e" stroke-width="6.3"/>
<path d="M489 268 Q503 264 518 261" stroke="#c99550" stroke-width="5.7"/>
<path d="M487 442 Q502 465 515 487" stroke="#c99550" stroke-width="4.0"/>
<path d="M507 153 Q514 154 525 155" stroke="#8a5a28" stroke-width="6.6"/>
<path d="M273 151 Q265 153 267 156" stroke="#8a5a28" stroke-width="6.3"/>
<path d="M219 428 Q199 446 194 465" stroke="#7a5026" stroke-width="7.8"/>
<path d="M456 184 Q456 179 472 173" stroke="#a06a34" stroke-width="5.2"/>
<path d="M391 552 Q401 571 396 591" stroke="#d6a460" stroke-width="4.8"/>
<path d="M336 479 Q331 498 333 517" stroke="#d6a460" stroke-width="6.5"/>
<path d="M222 415 Q211 431 195 446" stroke="#d6a460" stroke-width="6.2"/>
<path d="M247 158 Q248 158 233 157" stroke="#d6a460" stroke-width="4.3"/>
<path d="M373 481 Q374 503 377 525" stroke="#a06a34" stroke-width="4.9"/>
<path d="M296 516 Q291 533 291 549" stroke="#a06a34" stroke-width="6.8"/>
<path d="M517 348 Q530 355 548 362" stroke="#7a5026" stroke-width="7.5"/>
<path d="M283 555 Q280 576 273 598" stroke="#d6a460" stroke-width="7.3"/>
<path d="M437 184 Q449 182 451 180" stroke="#b07a3e" stroke-width="6.3"/>
<path d="M350 537 Q343 559 350 580" stroke="#c99550" stroke-width="7.1"/>
<path d="M261 517 Q250 538 246 559" stroke="#7a5026" stroke-width="7.8"/>
<path d="M249 536 Q237 557 234 579" stroke="#d6a460" stroke-width="7.2"/>
<path d="M233 399 Q222 413 209 426" stroke="#7a5026" stroke-width="5.8"/>
<path d="M502 353 Q510 357 526 362" stroke="#c99550" stroke-width="6.8"/>
<path d="M275 124 Q272 118 266 113" stroke="#b07a3e" stroke-width="6.1"/>
<path d="M193 288 Q189 295 170 303" stroke="#a06a34" stroke-width="7.7"/>
<path d="M352 477 Q357 489 352 501" stroke="#c99550" stroke-width="5.1"/>
<path d="M559 369 Q572 376 591 384" stroke="#a06a34" stroke-width="5.3"/>
<path d="M464 159 Q464 165 472 170" stroke="#7a5026" stroke-width="6.0"/>
<path d="M238 477 Q238 493 220 509" stroke="#a06a34" stroke-width="5.4"/>
<path d="M196 395 Q187 412 166 430" stroke="#a06a34" stroke-width="5.9"/>
<path d="M227 228 Q214 225 202 221" stroke="#8a5a28" stroke-width="4.2"/>
<path d="M471 158 Q470 155 489 152" stroke="#7a5026" stroke-width="5.3"/>
<path d="M195 472 Q180 492 177 511" stroke="#7a5026" stroke-width="5.1"/>
<path d="M254 151 Q243 149 243 147" stroke="#b07a3e" stroke-width="4.1"/>
<path d="M488 256 Q496 259 501 261" stroke="#d6a460" stroke-width="5.1"/>
<path d="M514 476 Q524 492 532 507" stroke="#b07a3e" stroke-width="7.5"/>
<path d="M497 173 Q504 174 514 175" stroke="#8a5a28" stroke-width="5.6"/>
<path d="M406 141 Q413 135 412 129" stroke="#7a5026" stroke-width="6.8"/>
<path d="M346 152 Q356 148 345 144" stroke="#7a5026" stroke-width="7.7"/>
<path d="M418 214 Q421 218 428 221" stroke="#7a5026" stroke-width="6.2"/>
<path d="M499 369 Q520 383 521 398" stroke="#7a5026" stroke-width="4.1"/>
<path d="M449 467 Q467 482 466 497" stroke="#7a5026" stroke-width="7.6"/>
<path d="M201 227 Q193 232 187 238" stroke="#c99550" stroke-width="7.6"/>
<path d="M286 196 Q290 193 275 190" stroke="#b07a3e" stroke-width="7.7"/>
<path d="M261 246 Q241 248 238 250" stroke="#7a5026" stroke-width="7.0"/>
<path d="M239 535 Q226 550 225 565" stroke="#a06a34" stroke-width="4.8"/>
<path d="M394 185 Q402 182 399 179" stroke="#a06a34" stroke-width="4.6"/>
<path d="M441 485 Q458 505 459 526" stroke="#b07a3e" stroke-width="7.0"/>
<path d="M296 456 Q289 472 289 489" stroke="#7a5026" stroke-width="7.5"/>
<path d="M262 188 Q263 183 246 177" stroke="#a06a34" stroke-width="5.0"/>
<path d="M312 558 Q313 576 307 593" stroke="#8a5a28" stroke-width="5.5"/>
<path d="M530 250 Q540 256 546 261" stroke="#a06a34" stroke-width="5.5"/>
<path d="M317 151 Q307 150 313 150" stroke="#d6a460" stroke-width="5.0"/>
<path d="M470 442 Q474 460 491 477" stroke="#d6a460" stroke-width="6.4"/>
<path d="M472 255 Q485 256 494 257" stroke="#a06a34" stroke-width="5.0"/>
<path d="M426 525 Q422 544 432 563" stroke="#c99550" stroke-width="5.5"/>
<path d="M378 504 Q384 520 381 535" stroke="#b07a3e" stroke-width="4.2"/>
<path d="M414 203 Q413 197 422 192" stroke="#c99550" stroke-width="6.6"/>
<path d="M474 495 Q481 508 485 521" stroke="#c99550" stroke-width="4.9"/>
<path d="M424 491 Q423 505 435 519" stroke="#7a5026" stroke-width="4.7"/>
<path d="M195 293 Q178 299 177 305" stroke="#7a5026" stroke-width="4.0"/>
<path d="M271 555 Q267 572 266 590" stroke="#c99550" stroke-width="7.2"/>
<path d="M443 202 Q447 203 455 203" stroke="#8a5a28" stroke-width="6.8"/>
<path d="M215 479 Q199 495 191 510" stroke="#b07a3e" stroke-width="5.0"/>
<path d="M483 327 Q496 336 513 345" stroke="#a06a34" stroke-width="7.4"/>
<path d="M365 192 Q364 184 368 176" stroke="#a06a34" stroke-width="6.4"/>
<path d="M563 271 Q583 279 590 287" stroke="#8a5a28" stroke-width="6.6"/>
<path d="M484 295 Q501 300 506 305" stroke="#8a5a28" stroke-width="6.6"/>
<path d="M410 558 Q420 575 416 591" stroke="#a06a34" stroke-width="7.9"/>
<path d="M339 498 Q332 517 337 536" stroke="#b07a3e" stroke-width="6.2"/>
<path d="M281 469 Q271 494 264 518" stroke="#c99550" stroke-width="7.7"/>
<path d="M396 191 Q399 187 404 182" stroke="#a06a34" stroke-width="5.3"/>
<path d="M229 427 Q219 444 204 460" stroke="#a06a34" stroke-width="7.7"/>
<path d="M226 134 Q212 135 216 136" stroke="#a06a34" stroke-width="5.7"/>
<path d="M434 522 Q430 544 445 565" stroke="#a06a34" stroke-width="4.4"/>
<path d="M518 370 Q533 383 550 396" stroke="#7a5026" stroke-width="7.3"/>
<path d="M470 282 Q474 284 496 286" stroke="#c99550" stroke-width="4.6"/>
<path d="M516 403 Q533 415 533 427" stroke="#b07a3e" stroke-width="5.5"/>
</g>
<ellipse cx="250" cy="218" rx="42" ry="36" fill="#c98a48"/>
<ellipse cx="258" cy="226" rx="22" ry="19" fill="#7a4520"/>
<ellipse cx="460" cy="222" rx="36" ry="34" fill="#c98a48"/>
<ellipse cx="452" cy="230" rx="19" ry="18" fill="#7a4520"/>
<path d="M262 235 L330 215 L420 222 L480 245 L505 320 L497 400 L455 445 L390 470 L315 470 L270 425 L252 330 Z" fill="#c4935c"/>
<path d="M300 255 L400 252 L425 330 L412 420 L350 445 L290 420 L278 330 Z" fill="#d2a56c"/>
<path d="M82 722 C110 700 140 665 170 635 C195 610 225 595 270 595 L290 615 C260 640 235 670 215 700 L198 735 L120 748 Z" fill="#dab890"/>
<path d="M205 702 C240 680 300 660 360 640 C420 620 470 605 520 598 L560 610 L550 640 C500 655 450 670 400 690 C350 705 310 722 270 738 L212 736 Z" fill="#dcbb92"/>
</g>
<g filter="url(#b2)">
<ellipse cx="481" cy="785" rx="10" ry="7" fill="#62c84e"/>
<ellipse cx="1044" cy="758" rx="7" ry="5" fill="#2a842e"/>
<ellipse cx="551" cy="774" rx="9" ry="6" fill="#3cb040"/>
<ellipse cx="1012" cy="748" rx="13" ry="9" fill="#46b03e"/>
<ellipse cx="656" cy="766" rx="10" ry="7" fill="#3aa63a"/>
<ellipse cx="993" cy="758" rx="6" ry="4" fill="#5cc24a"/>
<ellipse cx="148" cy="793" rx="12" ry="8" fill="#46b03e"/>
<ellipse cx="1068" cy="661" rx="6" ry="4" fill="#5cc24a"/>
<ellipse cx="602" cy="812" rx="9" ry="6" fill="#4ab840"/>
<ellipse cx="981" cy="772" rx="8" ry="5" fill="#34a034"/>
<ellipse cx="455" cy="768" rx="14" ry="10" fill="#4ab840"/>
<ellipse cx="1006" cy="806" rx="11" ry="8" fill="#78d05a"/>
<ellipse cx="66" cy="690" rx="13" ry="9" fill="#34a034"/>
<ellipse cx="889" cy="652" rx="13" ry="9" fill="#62c84e"/>
<ellipse cx="1035" cy="788" rx="8" ry="6" fill="#62c84e"/>
<ellipse cx="563" cy="790" rx="11" ry="8" fill="#3aa63a"/>
<ellipse cx="827" cy="673" rx="9" ry="7" fill="#2f9232"/>
<ellipse cx="900" cy="708" rx="11" ry="8" fill="#78d05a"/>
<ellipse cx="1066" cy="780" rx="12" ry="9" fill="#4ab840"/>
<ellipse cx="922" cy="774" rx="11" ry="8" fill="#3aa63a"/>
<ellipse cx="110" cy="773" rx="13" ry="9" fill="#3aa63a"/>
<ellipse cx="762" cy="813" rx="10" ry="7" fill="#46b03e"/>
<ellipse cx="582" cy="769" rx="10" ry="7" fill="#46b03e"/>
<ellipse cx="956" cy="677" rx="10" ry="7" fill="#2f9232"/>
<ellipse cx="872" cy="802" rx="12" ry="9" fill="#3aa63a"/>
<ellipse cx="696" cy="774" rx="9" ry="6" fill="#2f9232"/>
<ellipse cx="13" cy="691" rx="7" ry="5" fill="#2a842e"/>
<ellipse cx="824" cy="748" rx="7" ry="5" fill="#78d05a"/>
<ellipse cx="170" cy="815" rx="11" ry="7" fill="#3aa63a"/>
<ellipse cx="1042" cy="764" rx="11" ry="8" fill="#3cb040"/>
<ellipse cx="949" cy="775" rx="12" ry="8" fill="#2a842e"/>
<ellipse cx="620" cy="771" rx="13" ry="9" fill="#46b03e"/>
<ellipse cx="891" cy="762" rx="13" ry="9" fill="#3aa63a"/>
<ellipse cx="684" cy="732" rx="7" ry="5" fill="#78d05a"/>
<ellipse cx="291" cy="767" rx="11" ry="8" fill="#5cc24a"/>
<ellipse cx="280" cy="747" rx="7" ry="5" fill="#5cc24a"/>
<ellipse cx="1047" cy="646" rx="11" ry="8" fill="#5cc24a"/>
<ellipse cx="479" cy="753" rx="13" ry="9" fill="#3cb040"/>
<ellipse cx="1021" cy="645" rx="7" ry="5" fill="#5cc24a"/>
<ellipse cx="466" cy="798" rx="7" ry="5" fill="#34a034"/>
<ellipse cx="706" cy="756" rx="12" ry="9" fill="#4ab840"/>
<ellipse cx="846" cy="772" rx="10" ry="7" fill="#78d05a"/>
<ellipse cx="1058" cy="751" rx="7" ry="5" fill="#62c84e"/>
<ellipse cx="35" cy="617" rx="9" ry="7" fill="#2f9232"/>
<ellipse cx="643" cy="782" rx="9" ry="6" fill="#5cc24a"/>
<ellipse cx="484" cy="766" rx="7" ry="5" fill="#46b03e"/>
<ellipse cx="109" cy="810" rx="13" ry="9" fill="#46b03e"/>
<ellipse cx="1002" cy="730" rx="14" ry="10" fill="#46b03e"/>
<ellipse cx="186" cy="815" rx="8" ry="5" fill="#2f9232"/>
<ellipse cx="481" cy="782" rx="11" ry="8" fill="#2f9232"/>
<ellipse cx="322" cy="798" rx="12" ry="9" fill="#4ab840"/>
<ellipse cx="1026" cy="729" rx="13" ry="9" fill="#46b03e"/>
<ellipse cx="544" cy="768" rx="8" ry="6" fill="#3aa63a"/>
<ellipse cx="18" cy="746" rx="9" ry="6" fill="#3cb040"/>
<ellipse cx="259" cy="774" rx="11" ry="8" fill="#34a034"/>
<ellipse cx="110" cy="770" rx="10" ry="7" fill="#3cb040"/>
<ellipse cx="1055" cy="751" rx="12" ry="9" fill="#5cc24a"/>
<ellipse cx="734" cy="700" rx="10" ry="7" fill="#2a842e"/>
<ellipse cx="911" cy="712" rx="14" ry="10" fill="#34a034"/>
<ellipse cx="907" cy="779" rx="10" ry="7" fill="#62c84e"/>
<ellipse cx="821" cy="706" rx="12" ry="8" fill="#3aa63a"/>
<ellipse cx="893" cy="694" rx="9" ry="6" fill="#4ab840"/>
<ellipse cx="957" cy="769" rx="8" ry="6" fill="#46b03e"/>
<ellipse cx="1013" cy="728" rx="12" ry="8" fill="#46b03e"/>
<ellipse cx="36" cy="704" rx="9" ry="6" fill="#46b03e"/>
<ellipse cx="504" cy="775" rx="7" ry="5" fill="#62c84e"/>
<ellipse cx="649" cy="804" rx="13" ry="9" fill="#62c84e"/>
<ellipse cx="1080" cy="668" rx="6" ry="4" fill="#46b03e"/>
<ellipse cx="1015" cy="815" rx="14" ry="10" fill="#34a034"/>
<ellipse cx="952" cy="719" rx="10" ry="7" fill="#3aa63a"/>
<ellipse cx="1058" cy="756" rx="10" ry="7" fill="#78d05a"/>
<ellipse cx="836" cy="711" rx="8" ry="6" fill="#62c84e"/>
<ellipse cx="656" cy="752" rx="12" ry="8" fill="#5cc24a"/>
<ellipse cx="160" cy="811" rx="8" ry="5" fill="#2f9232"/>
<ellipse cx="41" cy="752" rx="9" ry="6" fill="#78d05a"/>
<ellipse cx="797" cy="781" rx="13" ry="9" fill="#34a034"/>
<ellipse cx="637" cy="749" rx="13" ry="9" fill="#2f9232"/>
<ellipse cx="724" cy="751" rx="9" ry="6" fill="#46b03e"/>
<ellipse cx="829" cy="682" rx="12" ry="8" fill="#4ab840"/>
<ellipse cx="491" cy="748" rx="10" ry="7" fill="#46b03e"/>
<ellipse cx="170" cy="814" rx="13" ry="9" fill="#2f9232"/>
<ellipse cx="149" cy="810" rx="13" ry="9" fill="#2a842e"/>
<ellipse cx="994" cy="747" rx="6" ry="4" fill="#2a842e"/>
<ellipse cx="1077" cy="784" rx="10" ry="7" fill="#34a034"/>
<ellipse cx="727" cy="732" rx="12" ry="9" fill="#3cb040"/>
<ellipse cx="669" cy="739" rx="13" ry="9" fill="#2a842e"/>
<ellipse cx="980" cy="738" rx="12" ry="8" fill="#62c84e"/>
<ellipse cx="1081" cy="686" rx="8" ry="6" fill="#46b03e"/>
<ellipse cx="627" cy="761" rx="12" ry="8" fill="#46b03e"/>
<ellipse cx="873" cy="674" rx="14" ry="10" fill="#2f9232"/>
<ellipse cx="454" cy="749" rx="9" ry="6" fill="#62c84e"/>
<ellipse cx="666" cy="751" rx="9" ry="6" fill="#4ab840"/>
<ellipse cx="888" cy="767" rx="12" ry="8" fill="#2a842e"/>
<ellipse cx="905" cy="716" rx="11" ry="8" fill="#2a842e"/>
<ellipse cx="340" cy="809" rx="6" ry="5" fill="#3cb040"/>
<ellipse cx="724" cy="796" rx="14" ry="10" fill="#3aa63a"/>
<ellipse cx="982" cy="678" rx="11" ry="8" fill="#46b03e"/>
<ellipse cx="786" cy="727" rx="13" ry="9" fill="#5cc24a"/>
<ellipse cx="66" cy="792" rx="13" ry="9" fill="#3cb040"/>
<ellipse cx="934" cy="707" rx="10" ry="7" fill="#3aa63a"/>
<ellipse cx="43" cy="714" rx="13" ry="9" fill="#46b03e"/>
<ellipse cx="451" cy="756" rx="13" ry="9" fill="#5cc24a"/>
<ellipse cx="968" cy="676" rx="12" ry="9" fill="#78d05a"/>
<ellipse cx="223" cy="799" rx="7" ry="5" fill="#46b03e"/>
<ellipse cx="819" cy="813" rx="11" ry="7" fill="#34a034"/>
<ellipse cx="515" cy="797" rx="12" ry="8" fill="#78d05a"/>
<ellipse cx="677" cy="807" rx="8" ry="6" fill="#2f9232"/>
<ellipse cx="597" cy="791" rx="8" ry="6" fill="#2f9232"/>
<ellipse cx="32" cy="732" rx="13" ry="9" fill="#34a034"/>
<ellipse cx="351" cy="785" rx="12" ry="9" fill="#2f9232"/>
<ellipse cx="1053" cy="799" rx="13" ry="9" fill="#62c84e"/>
<ellipse cx="537" cy="778" rx="13" ry="9" fill="#2f9232"/>
<ellipse cx="73" cy="664" rx="6" ry="4" fill="#78d05a"/>
<ellipse cx="945" cy="788" rx="6" ry="4" fill="#4ab840"/>
<ellipse cx="260" cy="785" rx="8" ry="5" fill="#78d05a"/>
<ellipse cx="481" cy="775" rx="8" ry="6" fill="#46b03e"/>
<ellipse cx="778" cy="806" rx="12" ry="8" fill="#2f9232"/>
<ellipse cx="926" cy="648" rx="14" ry="10" fill="#62c84e"/>
<ellipse cx="756" cy="690" rx="6" ry="4" fill="#46b03e"/>
<ellipse cx="56" cy="737" rx="10" ry="7" fill="#4ab840"/>
<ellipse cx="1069" cy="651" rx="7" ry="5" fill="#3cb040"/>
<ellipse cx="1026" cy="645" rx="6" ry="4" fill="#5cc24a"/>
<ellipse cx="923" cy="781" rx="9" ry="7" fill="#34a034"/>
<ellipse cx="872" cy="779" rx="7" ry="5" fill="#3aa63a"/>
<ellipse cx="174" cy="793" rx="11" ry="8" fill="#5cc24a"/>
<ellipse cx="909" cy="780" rx="12" ry="9" fill="#2f9232"/>
<ellipse cx="298" cy="767" rx="14" ry="10" fill="#3aa63a"/>
<ellipse cx="824" cy="792" rx="13" ry="9" fill="#3aa63a"/>
<ellipse cx="1076" cy="793" rx="11" ry="7" fill="#2a842e"/>
<ellipse cx="71" cy="700" rx="7" ry="5" fill="#4ab840"/>
<ellipse cx="550" cy="773" rx="14" ry="10" fill="#46b03e"/>
<ellipse cx="68" cy="626" rx="7" ry="5" fill="#4ab840"/>
<ellipse cx="485" cy="748" rx="13" ry="9" fill="#2a842e"/>
<ellipse cx="919" cy="805" rx="11" ry="8" fill="#3aa63a"/>
<ellipse cx="375" cy="783" rx="10" ry="7" fill="#3cb040"/>
<ellipse cx="31" cy="775" rx="13" ry="9" fill="#5cc24a"/>
<ellipse cx="218" cy="812" rx="10" ry="7" fill="#2a842e"/>
<ellipse cx="215" cy="761" rx="12" ry="9" fill="#2f9232"/>
<ellipse cx="971" cy="675" rx="14" ry="10" fill="#2a842e"/>
<ellipse cx="29" cy="773" rx="6" ry="4" fill="#46b03e"/>
<ellipse cx="840" cy="726" rx="8" ry="6" fill="#46b03e"/>
<ellipse cx="109" cy="769" rx="7" ry="5" fill="#3cb040"/>
<ellipse cx="1016" cy="780" rx="13" ry="9" fill="#5cc24a"/>
<ellipse cx="657" cy="803" rx="11" ry="8" fill="#2a842e"/>
<ellipse cx="1078" cy="685" rx="7" ry="5" fill="#2f9232"/>
<ellipse cx="877" cy="664" rx="13" ry="9" fill="#62c84e"/>
<ellipse cx="38" cy="637" rx="12" ry="9" fill="#2a842e"/>
<ellipse cx="479" cy="792" rx="14" ry="10" fill="#3aa63a"/>
<ellipse cx="23" cy="686" rx="13" ry="9" fill="#3cb040"/>
<ellipse cx="194" cy="771" rx="7" ry="5" fill="#2f9232"/>
<ellipse cx="743" cy="779" rx="6" ry="4" fill="#46b03e"/>
<ellipse cx="195" cy="755" rx="11" ry="7" fill="#2a842e"/>
<ellipse cx="866" cy="770" rx="10" ry="7" fill="#5cc24a"/>
<ellipse cx="799" cy="727" rx="14" ry="10" fill="#2a842e"/>
<ellipse cx="293" cy="764" rx="8" ry="5" fill="#3aa63a"/>
<ellipse cx="800" cy="756" rx="7" ry="5" fill="#5cc24a"/>
<ellipse cx="1069" cy="708" rx="14" ry="10" fill="#2a842e"/>
<ellipse cx="820" cy="785" rx="8" ry="5" fill="#4ab840"/>
<ellipse cx="1081" cy="706" rx="13" ry="9" fill="#62c84e"/>
<ellipse cx="394" cy="784" rx="8" ry="6" fill="#62c84e"/>
<ellipse cx="766" cy="693" rx="14" ry="10" fill="#3cb040"/>
<ellipse cx="811" cy="685" rx="11" ry="8" fill="#3aa63a"/>
<ellipse cx="180" cy="793" rx="7" ry="5" fill="#5cc24a"/>
<ellipse cx="1064" cy="797" rx="10" ry="7" fill="#3cb040"/>
<ellipse cx="1058" cy="786" rx="9" ry="6" fill="#3aa63a"/>
<ellipse cx="602" cy="772" rx="11" ry="8" fill="#78d05a"/>
<ellipse cx="205" cy="814" rx="11" ry="8" fill="#78d05a"/>
<ellipse cx="596" cy="788" rx="6" ry="4" fill="#2f9232"/>
<ellipse cx="675" cy="703" rx="12" ry="9" fill="#5cc24a"/>
<ellipse cx="258" cy="812" rx="10" ry="7" fill="#78d05a"/>
<ellipse cx="1075" cy="708" rx="14" ry="10" fill="#2a842e"/>
<ellipse cx="937" cy="657" rx="13" ry="9" fill="#3cb040"/>
<ellipse cx="157" cy="798" rx="9" ry="7" fill="#2f9232"/>
<ellipse cx="1035" cy="761" rx="7" ry="5" fill="#46b03e"/>
<ellipse cx="17" cy="611" rx="13" ry="9" fill="#3aa63a"/>
<ellipse cx="1056" cy="771" rx="13" ry="9" fill="#46b03e"/>
<ellipse cx="58" cy="668" rx="10" ry="7" fill="#2a842e"/>
<ellipse cx="706" cy="785" rx="11" ry="8" fill="#34a034"/>
<ellipse cx="120" cy="801" rx="10" ry="7" fill="#2f9232"/>
<ellipse cx="172" cy="763" rx="10" ry="7" fill="#2f9232"/>
<ellipse cx="550" cy="749" rx="8" ry="5" fill="#2a842e"/>
<ellipse cx="287" cy="791" rx="6" ry="4" fill="#2f9232"/>
<ellipse cx="1085" cy="699" rx="10" ry="7" fill="#5cc24a"/>
<ellipse cx="274" cy="761" rx="14" ry="10" fill="#34a034"/>
<ellipse cx="32" cy="794" rx="12" ry="9" fill="#2a842e"/>
<ellipse cx="740" cy="816" rx="11" ry="8" fill="#3cb040"/>
<ellipse cx="817" cy="693" rx="10" ry="7" fill="#34a034"/>
</g>
<g filter="url(#b2)">
<ellipse cx="352" cy="452" rx="46" ry="20" fill="#efe9de"/>
</g><g filter="url(#b3)">
<ellipse cx="138" cy="724" rx="52" ry="19" transform="rotate(-8 138 724)" fill="#e8dccb"/>
<ellipse cx="268" cy="714" rx="52" ry="19" transform="rotate(-10 268 714)" fill="#e6d9c6"/>
</g>
<g filter="url(#b3)">
<path d="M330 260 L372 260 L382 370 L320 370 Z" fill="#d8ad78" opacity="0.7"/>
<ellipse cx="298" cy="292" rx="22" ry="12" fill="#9a6a3c" opacity="0.6"/>
<ellipse cx="404" cy="292" rx="22" ry="12" fill="#9a6a3c" opacity="0.6"/>
<path d="M300 400 C320 390 340 395 350 405 C360 395 385 390 405 400 L400 430 L300 430 Z" fill="#d9b080"/>
</g>
<g filter="url(#b2)">
<ellipse cx="299" cy="292" rx="20" ry="10" fill="#e2c69a"/>
<ellipse cx="403" cy="292" rx="20" ry="10" fill="#e2c69a"/>
<ellipse cx="299" cy="289" rx="14" ry="7" fill="#3a2410"/>
<ellipse cx="403" cy="289" rx="14" ry="7" fill="#3a2410"/>
<path d="M315 372 Q348 364 382 372 L352 406 Z" fill="#1b1210"/>
<path d="M350 406 V430 M320 440 Q350 425 380 440" stroke="#3a2a20" stroke-width="4" fill="none"/>
</g>
</g></svg>
<div style="position:absolute;left:1104.2px;top:391px;width:16.3px;height:16px;background:#0b0f19;border:1px solid #4b5563;box-sizing:border-box;border-radius:3px;"></div>
<svg style="position:absolute;left:1106px;top:393px;" width="13" height="12" viewBox="0 0 13 12"><path d="M6.2 1.5 V7 M4 5 L6.2 7.2 L8.4 5 M2.6 6.8 V9.6 H9.8 V6.8" stroke="#d1d5db" stroke-width="1.1" fill="none"/></svg>
<div style="position:absolute;left:1124.2px;top:391px;width:16.4px;height:16px;background:#0b0f19;border:1px solid #4b5563;box-sizing:border-box;border-radius:3px;"></div>
<svg style="position:absolute;left:1126px;top:393px;" width="13" height="12" viewBox="0 0 13 12"><path d="M3.5 2.8 L9 8.3 M9 2.8 L3.5 8.3" stroke="#e5e7eb" stroke-width="1.4"/></svg>
<div style="position:absolute;left:825px;top:713.8px;width:33px;height:33px;background:#0b0f19;border:2.5px solid #f47a25;box-sizing:border-box;border-radius:0px;"></div>
<svg style="position:absolute;left:828.3px;top:718px" width="26.7" height="21.5" viewBox="0 0 423 317" preserveAspectRatio="none"><defs>
<filter id="b6" x="-10%" y="-10%" width="120%" height="120%"><feGaussianBlur stdDeviation="8"/></filter>
<filter id="b3" x="-10%" y="-10%" width="120%" height="120%"><feGaussianBlur stdDeviation="3"/></filter>
<filter id="b5" x="-10%" y="-10%" width="120%" height="120%"><feGaussianBlur stdDeviation="3.5"/></filter>
<filter id="b2" x="-10%" y="-10%" width="120%" height="120%"><feGaussianBlur stdDeviation="1.5"/></filter>
<linearGradient id="bd" x1="0" y1="0" x2="0" y2="1"><stop offset="0" stop-color="#d2a473"/><stop offset="1" stop-color="#c59766"/></linearGradient>
<radialGradient id="mane" cx="0.5" cy="0.3" r="0.65"><stop offset="0" stop-color="#bf8748"/><stop offset="0.7" stop-color="#a4713a"/><stop offset="1" stop-color="#8a5e30"/></radialGradient>
</defs>
<g transform="scale(0.38843)">
<rect width="1089" height="817" fill="#0b1f0e"/>
<g filter="url(#b6)">
<path d="M0 0 H430 L440 300 L200 250 L0 220 Z" fill="#06110a"/>
<path d="M430 0 H930 L925 250 L860 340 L600 335 L480 260 Z" fill="#155a1a"/>
<path d="M920 60 L1060 90 L1089 200 V560 L1000 520 L915 330 Z" fill="#3a8e2c"/>
<path d="M960 0 H1089 V120 L990 80 Z" fill="#0e2a10"/>
<path d="M0 230 L180 250 L200 420 L175 620 L0 640 Z" fill="#1d6a2c"/>
<path d="M0 600 L300 600 L700 625 L1089 570 V817 H0 Z" fill="#34a634"/>
<path d="M0 730 L1089 690 V817 H0 Z" fill="#46b83e"/>
<path d="M570 260 L850 270 L840 345 L590 345 Z" fill="#0a2a0e"/>
</g>
<g fill="#2c7064" filter="url(#b3)">
<path d="M85 0 Q115 70 150 115 Q178 60 150 0 Z"/>
<path d="M168 0 Q195 70 228 108 Q252 50 226 0 Z"/>
<path d="M262 0 Q305 55 362 112 Q358 40 322 0 Z"/>
<path d="M205 40 Q240 95 250 150 Q282 100 262 30 Z" fill="#1e5446"/>
</g>
<g filter="url(#b2)">
<path d="M86 480 Q110 469 133 453 Q102 434 79 450 Z" fill="#3a9a78"/>
<path d="M168 435 Q170 414 169 391 Q138 401 141 425 Z" fill="#3aaa48"/>
<path d="M158 503 Q126 486 87 512 Q120 531 154 540 Z" fill="#2c8f5e"/>
<path d="M129 501 Q147 496 155 473 Q133 472 118 482 Z" fill="#3aaa48"/>
<path d="M162 371 Q170 351 161 327 Q141 343 137 363 Z" fill="#27863a"/>
<path d="M140 410 Q110 390 81 368 Q75 419 111 434 Z" fill="#56c060"/>
<path d="M58 549 Q60 531 44 512 Q22 530 27 548 Z" fill="#2f9a3c"/>
<path d="M165 403 Q199 415 228 384 Q196 389 162 381 Z" fill="#3aaa48"/>
<path d="M13 397 Q36 384 31 348 Q7 361 -12 378 Z" fill="#3aaa48"/>
<path d="M60 258 Q35 233 11 207 Q-1 253 31 275 Z" fill="#2f9a3c"/>
<path d="M151 233 Q150 207 129 183 Q111 211 119 236 Z" fill="#3aaa48"/>
<path d="M34 526 Q14 500 -24 514 Q3 526 24 548 Z" fill="#4cb85a"/>
<path d="M-8 612 Q19 605 46 589 Q15 560 -11 574 Z" fill="#2f9a3c"/>
<path d="M88 597 Q99 581 87 554 Q58 561 54 581 Z" fill="#3aaa48"/>
<path d="M-2 496 Q21 488 34 462 Q7 464 -14 476 Z" fill="#3aaa48"/>
<path d="M57 475 Q58 447 20 436 Q17 465 23 490 Z" fill="#4cb85a"/>
<path d="M30 397 Q36 375 36 350 Q7 363 6 387 Z" fill="#3a9a78"/>
<path d="M32 559 Q54 561 70 533 Q46 517 25 522 Z" fill="#4cb85a"/>
<path d="M78 261 Q44 258 8 265 Q40 289 75 286 Z" fill="#2c8f5e"/>
<path d="M95 610 Q88 583 75 557 Q43 584 58 611 Z" fill="#2f9a3c"/>
<path d="M100 509 Q114 494 102 469 Q85 483 76 500 Z" fill="#3aaa48"/>
<path d="M14 393 Q3 378 -22 377 Q-19 400 -5 412 Z" fill="#3a9a78"/>
<path d="M22 397 Q56 390 82 359 Q43 353 12 367 Z" fill="#2c8f5e"/>
<path d="M189 425 Q184 402 159 388 Q160 413 169 434 Z" fill="#3a9a78"/>
<path d="M99 531 Q78 502 51 478 Q54 517 79 543 Z" fill="#3a9a78"/>
<path d="M13 636 Q27 622 26 594 Q-6 591 -15 611 Z" fill="#27863a"/>
<path d="M137 624 Q161 618 176 589 Q145 579 124 592 Z" fill="#56c060"/>
<path d="M4 504 Q2 486 -20 475 Q-24 496 -18 512 Z" fill="#2f9a3c"/>
<path d="M150 403 Q172 385 177 352 Q146 362 129 383 Z" fill="#56c060"/>
<path d="M106 440 Q91 427 75 415 Q68 442 87 452 Z" fill="#2c8f5e"/>
<path d="M164 507 Q171 473 147 441 Q138 475 136 508 Z" fill="#3aaa48"/>
<path d="M36 315 Q63 305 87 284 Q53 271 27 287 Z" fill="#3aaa48"/>
<path d="M144 309 Q138 279 113 252 Q95 288 109 317 Z" fill="#3aaa48"/>
<path d="M117 347 Q90 344 62 341 Q72 382 102 379 Z" fill="#56c060"/>
<path d="M11 654 Q32 652 36 621 Q14 622 -5 629 Z" fill="#3aaa48"/>
<path d="M84 458 Q101 433 99 397 Q64 411 53 439 Z" fill="#3a9a78"/>
<path d="M12 259 Q29 252 39 229 Q13 215 -1 228 Z" fill="#3a9a78"/>
<path d="M134 472 Q155 455 144 422 Q127 442 112 462 Z" fill="#56c060"/>
<path d="M41 275 Q13 267 -18 281 Q8 301 37 304 Z" fill="#2c8f5e"/>
<path d="M125 368 Q104 366 81 375 Q94 407 117 402 Z" fill="#27863a"/>
<path d="M3 437 Q18 423 18 396 Q-7 403 -18 420 Z" fill="#27863a"/>
<path d="M200 308 Q234 308 247 270 Q220 281 188 285 Z" fill="#4cb85a"/>
<path d="M156 282 Q157 253 130 228 Q114 259 120 287 Z" fill="#4cb85a"/>
<path d="M131 453 Q147 434 163 416 Q130 407 116 430 Z" fill="#3aaa48"/>
<path d="M171 578 Q193 585 206 556 Q185 555 165 553 Z" fill="#4cb85a"/>
<path d="M156 378 Q184 357 214 346 Q174 325 148 351 Z" fill="#2f9a3c"/>
<path d="M70 399 Q39 381 17 356 Q16 401 50 415 Z" fill="#56c060"/>
<path d="M165 297 Q165 260 123 248 Q139 275 143 309 Z" fill="#3aaa48"/>
<path d="M190 457 Q216 444 201 405 Q179 421 159 438 Z" fill="#3a9a78"/>
<path d="M24 324 Q22 302 11 278 Q-18 298 -9 322 Z" fill="#2c8f5e"/>
<path d="M109 598 Q100 566 55 569 Q67 597 82 624 Z" fill="#56c060"/>
<path d="M34 603 Q61 601 86 582 Q57 564 31 572 Z" fill="#3aaa48"/>
<path d="M24 228 Q17 202 -7 182 Q-8 212 3 236 Z" fill="#4cb85a"/>
<path d="M198 264 Q179 256 154 269 Q166 298 188 299 Z" fill="#4cb85a"/>
<path d="M52 413 Q30 399 -1 409 Q14 438 38 445 Z" fill="#4cb85a"/>
</g>
<g filter="url(#b2)">
<path d="M515 103 Q428 96 372 33 Q418 113 507 117 Z" fill="#52cc48"/>
<path d="M556 90 Q592 12 621 -69 Q580 6 546 85 Z" fill="#22922a"/>
<path d="M699 134 Q783 56 857 -31 Q774 47 691 126 Z" fill="#52cc48"/>
<path d="M672 104 Q690 -7 624 -101 Q674 -4 658 106 Z" fill="#3cc040"/>
<path d="M718 81 Q632 12 583 -84 Q616 24 704 91 Z" fill="#1e8024"/>
<path d="M813 164 Q865 92 942 52 Q852 76 803 151 Z" fill="#22922a"/>
<path d="M831 77 Q701 17 605 -88 Q689 32 821 89 Z" fill="#3cc040"/>
<path d="M511 159 Q505 28 459 -96 Q492 30 500 161 Z" fill="#3cc040"/>
<path d="M844 73 Q826 -20 863 -104 Q805 -23 827 70 Z" fill="#2a9c2e"/>
<path d="M706 151 Q705 31 698 -89 Q686 31 690 151 Z" fill="#3cc040"/>
<path d="M476 153 Q469 5 541 -122 Q457 2 466 150 Z" fill="#48c84a"/>
<path d="M559 167 Q663 57 811 31 Q656 42 553 154 Z" fill="#2fae34"/>
<path d="M784 64 Q708 12 634 -44 Q698 24 776 75 Z" fill="#48c84a"/>
<path d="M748 64 Q791 -65 860 -182 Q777 -72 737 59 Z" fill="#3cc040"/>
<path d="M638 172 Q679 115 663 46 Q668 113 630 170 Z" fill="#2a9c2e"/>
<path d="M842 150 Q901 46 1003 -14 Q889 33 832 139 Z" fill="#48c84a"/>
<path d="M741 105 Q807 51 825 -35 Q791 40 728 97 Z" fill="#2fae34"/>
<path d="M847 113 Q949 20 1058 -66 Q940 8 839 104 Z" fill="#52cc48"/>
<path d="M550 80 Q417 23 374 -113 Q405 33 540 89 Z" fill="#22922a"/>
<path d="M633 138 Q634 58 669 -12 Q620 55 622 135 Z" fill="#52cc48"/>
<path d="M655 76 Q583 -2 481 -38 Q573 12 647 88 Z" fill="#48c84a"/>
<path d="M821 173 Q718 124 618 70 Q712 135 815 183 Z" fill="#52cc48"/>
<path d="M703 153 Q743 108 733 45 Q730 103 692 150 Z" fill="#22922a"/>
<path d="M722 127 Q834 103 907 12 Q825 88 715 115 Z" fill="#2fae34"/>
<path d="M501 135 Q558 101 561 32 Q545 93 491 128 Z" fill="#3cc040"/>
<path d="M868 126 Q892 34 903 -62 Q877 30 856 124 Z" fill="#48c84a"/>
<path d="M749 100 Q712 -14 631 -103 Q694 -4 733 108 Z" fill="#1e8024"/>
<path d="M816 66 Q903 -8 938 -118 Q893 -15 807 60 Z" fill="#52cc48"/>
<path d="M651 172 Q662 109 706 66 Q644 98 636 163 Z" fill="#52cc48"/>
<path d="M890 111 Q824 -33 870 -183 Q813 -32 881 112 Z" fill="#3cc040"/>
<path d="M846 164 Q702 102 630 -34 Q690 115 836 174 Z" fill="#3cc040"/>
<path d="M757 111 Q715 69 679 21 Q705 77 749 118 Z" fill="#1e8024"/>
<path d="M532 111 Q590 6 577 -116 Q575 3 519 109 Z" fill="#52cc48"/>
<path d="M713 185 Q820 121 921 48 Q811 107 706 174 Z" fill="#3cc040"/>
<path d="M610 126 Q672 73 719 5 Q659 60 600 116 Z" fill="#1e8024"/>
<path d="M744 140 Q794 85 816 13 Q780 76 732 132 Z" fill="#3cc040"/>
<path d="M558 144 Q582 92 584 35 Q567 88 546 140 Z" fill="#22922a"/>
<path d="M511 121 Q450 98 404 53 Q443 108 505 129 Z" fill="#52cc48"/>
<path d="M929 116 Q930 23 864 -47 Q912 29 914 121 Z" fill="#48c84a"/>
<path d="M501 79 Q570 -12 641 -102 Q556 -24 489 69 Z" fill="#2a9c2e"/>
<path d="M818 100 Q761 59 712 9 Q746 74 805 113 Z" fill="#2a9c2e"/>
<path d="M722 155 Q798 97 873 37 Q788 83 714 144 Z" fill="#22922a"/>
<path d="M620 124 Q583 20 578 -90 Q565 22 605 126 Z" fill="#2a9c2e"/>
<path d="M831 65 Q760 -30 682 -119 Q745 -19 818 74 Z" fill="#2fae34"/>
<path d="M824 105 Q876 49 933 -0 Q864 35 814 93 Z" fill="#52cc48"/>
<path d="M524 146 Q538 5 558 -136 Q518 2 507 144 Z" fill="#52cc48"/>
<path d="M845 93 Q788 17 763 -74 Q769 25 830 100 Z" fill="#52cc48"/>
<path d="M638 101 Q632 6 573 -72 Q613 12 622 106 Z" fill="#48c84a"/>
<path d="M637 103 Q580 3 477 -51 Q571 12 629 111 Z" fill="#3cc040"/>
<path d="M876 89 Q775 58 691 -4 Q769 69 872 98 Z" fill="#1e8024"/>
<path d="M478 160 Q415 59 431 -56 Q396 62 463 162 Z" fill="#22922a"/>
<path d="M503 154 Q537 96 597 69 Q526 82 494 143 Z" fill="#52cc48"/>
<path d="M849 113 Q893 22 936 -70 Q880 15 838 108 Z" fill="#1e8024"/>
<path d="M631 154 Q621 85 574 31 Q606 91 618 159 Z" fill="#48c84a"/>
<path d="M799 169 Q708 51 738 -92 Q694 54 787 171 Z" fill="#52cc48"/>
<path d="M644 70 Q659 -38 620 -141 Q643 -37 631 71 Z" fill="#2fae34"/>
<path d="M842 110 Q840 40 812 -25 Q827 42 832 112 Z" fill="#52cc48"/>
<path d="M790 96 Q721 6 729 -105 Q700 11 773 101 Z" fill="#22922a"/>
<path d="M613 77 Q687 -34 688 -170 Q668 -41 597 71 Z" fill="#3cc040"/>
<path d="M472 121 Q507 41 573 -15 Q497 33 464 114 Z" fill="#3cc040"/>
<path d="M579 280 Q589 204 602 129 Q569 200 562 276 Z" fill="#3cc040"/>
<path d="M894 328 Q903 180 968 49 Q887 176 882 324 Z" fill="#1e8024"/>
<path d="M883 319 Q819 229 802 121 Q804 234 871 323 Z" fill="#2fae34"/>
<path d="M490 333 Q568 279 598 185 Q553 267 477 323 Z" fill="#1e8024"/>
<path d="M834 138 Q938 43 1058 -30 Q929 30 826 127 Z" fill="#2a9c2e"/>
<path d="M842 279 Q836 205 867 141 Q817 201 827 275 Z" fill="#3cc040"/>
<path d="M891 294 Q801 206 701 130 Q792 216 883 302 Z" fill="#1e8024"/>
<path d="M533 285 Q392 271 291 175 Q387 282 529 294 Z" fill="#2a9c2e"/>
<path d="M632 256 Q705 120 642 -23 Q689 119 619 255 Z" fill="#52cc48"/>
<path d="M741 306 Q707 178 624 74 Q695 184 731 311 Z" fill="#48c84a"/>
<path d="M830 212 Q765 137 664 122 Q758 148 825 221 Z" fill="#48c84a"/>
<path d="M611 182 Q522 162 469 92 Q512 177 602 195 Z" fill="#48c84a"/>
<path d="M503 154 Q585 58 582 -71 Q565 50 487 148 Z" fill="#52cc48"/>
<path d="M773 121 Q695 16 700 -113 Q681 20 762 124 Z" fill="#3cc040"/>
<path d="M826 312 Q924 235 995 131 Q916 227 819 305 Z" fill="#1e8024"/>
<path d="M905 291 Q997 200 1116 152 Q987 184 897 279 Z" fill="#1e8024"/>
<path d="M560 278 Q525 136 444 13 Q511 142 548 283 Z" fill="#1e8024"/>
<path d="M675 198 Q601 108 491 62 Q590 122 665 210 Z" fill="#3cc040"/>
<path d="M548 212 Q587 96 697 46 Q578 88 541 205 Z" fill="#2fae34"/>
<path d="M929 219 Q981 149 1024 72 Q968 140 919 212 Z" fill="#2a9c2e"/>
<path d="M771 294 Q841 234 885 151 Q825 220 758 283 Z" fill="#22922a"/>
<path d="M808 252 Q770 127 697 17 Q754 134 795 258 Z" fill="#3cc040"/>
<path d="M475 190 Q403 93 387 -26 Q388 99 462 195 Z" fill="#2fae34"/>
<path d="M621 178 Q557 62 424 32 Q545 77 611 191 Z" fill="#22922a"/>
<path d="M723 198 Q754 129 717 61 Q741 129 712 198 Z" fill="#52cc48"/>
<path d="M933 282 Q1006 195 1110 154 Q996 180 925 269 Z" fill="#2fae34"/>
<path d="M504 175 Q570 63 540 -65 Q558 61 494 173 Z" fill="#22922a"/>
<path d="M594 313 Q587 189 557 67 Q566 191 577 315 Z" fill="#3cc040"/>
<path d="M729 240 Q615 143 580 -0 Q602 151 718 246 Z" fill="#2a9c2e"/>
<path d="M905 124 Q970 54 971 -43 Q954 47 892 118 Z" fill="#2a9c2e"/>
<path d="M552 234 Q520 179 452 174 Q509 195 543 247 Z" fill="#3cc040"/>
<path d="M936 154 Q1026 52 1076 -77 Q1011 42 923 146 Z" fill="#48c84a"/>
<path d="M825 154 Q818 96 795 41 Q804 99 813 156 Z" fill="#1e8024"/>
<path d="M546 232 Q517 122 430 47 Q508 128 538 237 Z" fill="#22922a"/>
<path d="M806 292 Q776 194 754 94 Q760 197 793 295 Z" fill="#2fae34"/>
<path d="M760 276 Q827 169 891 60 Q810 158 746 267 Z" fill="#48c84a"/>
<path d="M892 278 Q939 230 974 173 Q923 217 879 266 Z" fill="#2fae34"/>
<path d="M710 220 Q784 176 841 110 Q776 165 703 211 Z" fill="#2fae34"/>
<path d="M671 199 Q591 92 561 -36 Q573 100 656 206 Z" fill="#1e8024"/>
<path d="M862 179 Q975 84 1075 -25 Q963 70 852 168 Z" fill="#48c84a"/>
<path d="M581 185 Q582 105 536 37 Q561 111 564 190 Z" fill="#2fae34"/>
<path d="M875 202 Q914 96 891 -15 Q900 95 864 201 Z" fill="#3cc040"/>
<path d="M732 312 Q636 223 521 158 Q624 239 721 325 Z" fill="#2fae34"/>
<path d="M677 187 Q726 149 729 85 Q716 143 669 183 Z" fill="#3cc040"/>
<path d="M849 206 Q810 102 772 -2 Q796 107 838 209 Z" fill="#2fae34"/>
<path d="M612 187 Q494 124 421 13 Q483 135 603 196 Z" fill="#2a9c2e"/>
<path d="M604 329 Q681 307 713 230 Q668 292 594 316 Z" fill="#2a9c2e"/>
<path d="M474 263 Q492 151 560 64 Q476 144 461 257 Z" fill="#1e8024"/>
<path d="M879 124 Q766 67 681 -25 Q753 83 868 138 Z" fill="#22922a"/>
<path d="M664 311 Q554 197 551 42 Q540 203 652 316 Z" fill="#2a9c2e"/>
<path d="M572 191 Q607 126 632 56 Q590 118 558 184 Z" fill="#3cc040"/>
<path d="M604 185 Q649 86 731 17 Q636 75 593 176 Z" fill="#2fae34"/>
<path d="M608 327 Q637 250 660 172 Q620 244 594 321 Z" fill="#52cc48"/>
<path d="M500 316 Q367 259 264 161 Q358 273 492 328 Z" fill="#2fae34"/>
<path d="M581 292 Q500 264 446 199 Q492 274 575 301 Z" fill="#2a9c2e"/>
<path d="M811 131 Q877 94 889 16 Q863 83 799 122 Z" fill="#2fae34"/>
<path d="M739 126 Q793 95 828 43 Q782 82 730 115 Z" fill="#2fae34"/>
<path d="M636 270 Q710 195 752 97 Q694 183 622 260 Z" fill="#1e8024"/>
<path d="M927 284 Q948 174 937 61 Q935 173 917 283 Z" fill="#2a9c2e"/>
<path d="M577 221 Q627 98 719 4 Q612 87 564 212 Z" fill="#2a9c2e"/>
<path d="M723 309 Q759 236 752 152 Q742 232 709 306 Z" fill="#3cc040"/>
<path d="M735 307 Q706 240 637 208 Q693 252 724 317 Z" fill="#2fae34"/>
<path d="M703 285 Q748 249 780 198 Q734 234 691 273 Z" fill="#2fae34"/>
<path d="M721 291 Q694 225 638 180 Q682 234 710 298 Z" fill="#22922a"/>
<path d="M849 285 Q958 207 995 76 Q949 200 841 280 Z" fill="#48c84a"/>
<path d="M546 171 Q459 87 373 3 Q447 99 535 181 Z" fill="#2a9c2e"/>
<path d="M613 225 Q694 129 713 2 Q683 123 604 221 Z" fill="#2fae34"/>
<path d="M746 152 Q793 58 851 -29 Q784 53 738 147 Z" fill="#2fae34"/>
<path d="M716 141 Q748 45 731 -58 Q726 42 698 139 Z" fill="#2fae34"/>
<path d="M804 336 Q805 251 838 174 Q789 247 790 333 Z" fill="#2fae34"/>
<path d="M682 323 Q628 249 624 159 Q616 253 672 327 Z" fill="#1e8024"/>
<path d="M742 343 Q839 273 845 151 Q821 263 728 335 Z" fill="#2a9c2e"/>
<path d="M548 316 Q599 257 668 225 Q588 241 539 303 Z" fill="#48c84a"/>
<path d="M630 161 Q645 92 638 20 Q630 90 617 160 Z" fill="#3cc040"/>
<path d="M825 224 Q790 110 811 -5 Q770 111 809 224 Z" fill="#3cc040"/>
<path d="M647 139 Q686 59 714 -27 Q671 52 633 133 Z" fill="#22922a"/>
<path d="M814 234 Q816 116 843 2 Q803 114 803 232 Z" fill="#3cc040"/>
<path d="M540 323 Q455 217 452 84 Q436 223 524 329 Z" fill="#52cc48"/>
<path d="M935 304 Q957 164 897 34 Q943 166 923 305 Z" fill="#48c84a"/>
<path d="M709 131 Q693 55 667 -19 Q680 58 699 133 Z" fill="#2fae34"/>
<path d="M525 165 Q526 62 479 -31 Q514 65 515 167 Z" fill="#52cc48"/>
<path d="M590 283 Q619 220 632 151 Q600 213 575 277 Z" fill="#3cc040"/>
<path d="M677 150 Q667 61 677 -27 Q653 61 665 150 Z" fill="#2fae34"/>
<path d="M564 125 Q477 43 359 19 Q472 53 559 133 Z" fill="#1e8024"/>
<path d="M813 259 Q714 163 583 113 Q704 178 805 272 Z" fill="#1e8024"/>
<path d="M916 306 Q816 235 779 121 Q800 246 902 316 Z" fill="#2fae34"/>
<path d="M695 233 Q747 164 827 134 Q739 152 688 223 Z" fill="#52cc48"/>
<path d="M654 220 Q595 113 487 52 Q583 124 644 229 Z" fill="#3cc040"/>
<path d="M894 297 Q907 216 878 138 Q890 217 880 297 Z" fill="#2a9c2e"/>
<path d="M476 204 Q452 148 434 90 Q439 152 465 208 Z" fill="#48c84a"/>
<path d="M862 188 Q909 56 989 -60 Q900 51 854 184 Z" fill="#2fae34"/>
<path d="M885 241 Q814 145 757 41 Q799 154 873 248 Z" fill="#3cc040"/>
<path d="M624 311 Q526 236 407 198 Q517 252 617 324 Z" fill="#3cc040"/>
<path d="M758 209 Q740 130 720 51 Q724 133 745 212 Z" fill="#2a9c2e"/>
<path d="M919 208 Q982 105 1065 18 Q971 96 910 201 Z" fill="#22922a"/>
<path d="M923 149 Q876 89 821 35 Q866 97 915 156 Z" fill="#52cc48"/>
<path d="M899 329 Q805 276 703 243 Q797 292 892 342 Z" fill="#2a9c2e"/>
<path d="M758 247 Q815 100 952 26 Q805 91 749 240 Z" fill="#22922a"/>
<path d="M476 292 Q444 199 355 151 Q428 212 462 303 Z" fill="#3cc040"/>
<path d="M541 257 Q525 148 529 40 Q510 149 529 257 Z" fill="#22922a"/>
<path d="M779 231 Q810 147 831 60 Q798 143 769 228 Z" fill="#52cc48"/>
<path d="M523 129 Q482 73 412 61 Q474 85 516 139 Z" fill="#52cc48"/>
<path d="M705 262 Q582 247 504 154 Q572 264 697 277 Z" fill="#48c84a"/>
<path d="M585 236 Q633 157 693 86 Q620 146 574 227 Z" fill="#52cc48"/>
<path d="M787 166 Q845 119 887 56 Q831 105 775 155 Z" fill="#1e8024"/>
<path d="M663 277 Q661 137 730 18 Q649 134 653 274 Z" fill="#2a9c2e"/>
<path d="M759 187 Q870 69 850 -94 Q854 64 745 182 Z" fill="#48c84a"/>
<path d="M923 152 Q953 62 993 -24 Q937 55 909 146 Z" fill="#52cc48"/>
<path d="M783 147 Q656 62 570 -63 Q648 70 776 154 Z" fill="#2a9c2e"/>
<path d="M809 332 Q765 251 673 226 Q752 266 798 345 Z" fill="#2fae34"/>
<path d="M546 134 Q513 -0 502 -138 Q499 2 535 136 Z" fill="#52cc48"/>
<path d="M753 293 Q825 233 912 201 Q819 221 748 284 Z" fill="#52cc48"/>
<path d="M874 223 Q943 140 1014 59 Q928 126 861 212 Z" fill="#22922a"/>
<path d="M538 311 Q463 228 423 125 Q448 237 525 318 Z" fill="#22922a"/>
<path d="M572 225 Q511 160 519 74 Q500 164 562 228 Z" fill="#2fae34"/>
<path d="M821 259 Q733 243 661 192 Q723 263 814 276 Z" fill="#3cc040"/>
<path d="M874 225 Q813 103 816 -32 Q797 106 861 228 Z" fill="#48c84a"/>
<path d="M757 298 Q750 216 672 178 Q733 226 743 306 Z" fill="#22922a"/>
<path d="M676 308 Q714 247 737 178 Q696 237 661 299 Z" fill="#2fae34"/>
<path d="M780 174 Q661 168 588 77 Q653 182 774 186 Z" fill="#2fae34"/>
<path d="M561 326 Q488 238 371 237 Q482 250 556 336 Z" fill="#2a9c2e"/>
<path d="M702 188 Q664 67 708 -48 Q643 66 684 187 Z" fill="#2a9c2e"/>
<path d="M911 211 Q952 143 976 67 Q942 138 903 206 Z" fill="#1e8024"/>
<path d="M575 203 Q557 86 498 -19 Q536 92 558 208 Z" fill="#2a9c2e"/>
<path d="M674 185 Q567 135 477 58 Q560 144 669 193 Z" fill="#1e8024"/>
<path d="M813 169 Q855 70 919 -17 Q844 63 804 164 Z" fill="#52cc48"/>
<path d="M538 198 Q497 157 458 116 Q485 168 528 206 Z" fill="#48c84a"/>
<path d="M614 243 Q688 221 737 159 Q681 209 608 233 Z" fill="#3cc040"/>
<path d="M518 336 Q536 185 464 48 Q520 187 504 338 Z" fill="#3cc040"/>
<path d="M882 292 Q821 217 725 195 Q810 234 872 306 Z" fill="#22922a"/>
</g>
<g filter="url(#b2)">
<circle cx="1006" cy="75" r="10" fill="#74c64e"/>
<circle cx="1074" cy="98" r="9" fill="#2a7424"/>
<circle cx="1069" cy="507" r="9" fill="#52ac3a"/>
<circle cx="1044" cy="292" r="8" fill="#74c64e"/>
<circle cx="1002" cy="261" r="9" fill="#3f9a30"/>
<circle cx="1005" cy="86" r="9" fill="#44a032"/>
<circle cx="964" cy="94" r="5" fill="#2a7424"/>
<circle cx="941" cy="309" r="12" fill="#2a7424"/>
<circle cx="948" cy="309" r="9" fill="#3f9a30"/>
<circle cx="1066" cy="135" r="12" fill="#44a032"/>
<circle cx="934" cy="165" r="11" fill="#62bc44"/>
<circle cx="1059" cy="477" r="9" fill="#4aa236"/>
<circle cx="1039" cy="198" r="11" fill="#44a032"/>
<circle cx="951" cy="77" r="8" fill="#44a032"/>
<circle cx="964" cy="398" r="6" fill="#44a032"/>
<circle cx="1052" cy="320" r="7" fill="#44a032"/>
<circle cx="1064" cy="463" r="9" fill="#52ac3a"/>
<circle cx="1054" cy="147" r="8" fill="#52ac3a"/>
<circle cx="1081" cy="182" r="7" fill="#74c64e"/>
<circle cx="947" cy="268" r="11" fill="#44a032"/>
<circle cx="1072" cy="107" r="12" fill="#348a2a"/>
<circle cx="1008" cy="231" r="12" fill="#348a2a"/>
<circle cx="1012" cy="577" r="8" fill="#2a7424"/>
<circle cx="1037" cy="501" r="12" fill="#348a2a"/>
<circle cx="1036" cy="162" r="6" fill="#44a032"/>
<circle cx="922" cy="212" r="7" fill="#2a7424"/>
<circle cx="1021" cy="252" r="6" fill="#52ac3a"/>
<circle cx="1035" cy="445" r="8" fill="#4aa236"/>
<circle cx="1049" cy="172" r="6" fill="#4aa236"/>
<circle cx="986" cy="303" r="9" fill="#52ac3a"/>
<circle cx="956" cy="365" r="7" fill="#4aa236"/>
<circle cx="1081" cy="110" r="10" fill="#348a2a"/>
<circle cx="1077" cy="268" r="10" fill="#348a2a"/>
<circle cx="993" cy="103" r="8" fill="#4aa236"/>
<circle cx="1017" cy="406" r="7" fill="#3f9a30"/>
<circle cx="1032" cy="195" r="8" fill="#62bc44"/>
<circle cx="1018" cy="512" r="8" fill="#4aa236"/>
<circle cx="1063" cy="371" r="9" fill="#52ac3a"/>
<circle cx="994" cy="177" r="11" fill="#3f9a30"/>
<circle cx="1031" cy="245" r="11" fill="#3f9a30"/>
<circle cx="1031" cy="149" r="6" fill="#62bc44"/>
<circle cx="996" cy="231" r="10" fill="#3f9a30"/>
<circle cx="1084" cy="568" r="12" fill="#74c64e"/>
<circle cx="990" cy="187" r="9" fill="#52ac3a"/>
<circle cx="1089" cy="104" r="8" fill="#74c64e"/>
<circle cx="1053" cy="545" r="9" fill="#348a2a"/>
<circle cx="1002" cy="493" r="9" fill="#52ac3a"/>
<circle cx="1044" cy="113" r="6" fill="#4aa236"/>
<circle cx="1030" cy="565" r="8" fill="#52ac3a"/>
<circle cx="990" cy="149" r="8" fill="#2a7424"/>
<circle cx="1079" cy="527" r="5" fill="#2a7424"/>
<circle cx="987" cy="356" r="12" fill="#52ac3a"/>
<circle cx="967" cy="329" r="6" fill="#348a2a"/>
<circle cx="938" cy="115" r="9" fill="#4aa236"/>
<circle cx="976" cy="195" r="9" fill="#44a032"/>
<circle cx="924" cy="181" r="8" fill="#52ac3a"/>
<circle cx="1006" cy="277" r="9" fill="#52ac3a"/>
<circle cx="987" cy="75" r="6" fill="#52ac3a"/>
<circle cx="1043" cy="433" r="6" fill="#3f9a30"/>
<circle cx="985" cy="322" r="11" fill="#3f9a30"/>
<circle cx="983" cy="223" r="7" fill="#52ac3a"/>
<circle cx="1029" cy="284" r="11" fill="#348a2a"/>
<circle cx="1029" cy="522" r="12" fill="#52ac3a"/>
<circle cx="984" cy="223" r="10" fill="#4aa236"/>
<circle cx="953" cy="113" r="11" fill="#74c64e"/>
<circle cx="977" cy="290" r="8" fill="#3f9a30"/>
<circle cx="969" cy="341" r="6" fill="#74c64e"/>
<circle cx="1010" cy="274" r="7" fill="#52ac3a"/>
<circle cx="1039" cy="87" r="8" fill="#348a2a"/>
<circle cx="1005" cy="339" r="10" fill="#2a7424"/>
<circle cx="916" cy="373" r="12" fill="#2a7424"/>
<circle cx="1083" cy="424" r="11" fill="#348a2a"/>
<circle cx="1021" cy="371" r="7" fill="#44a032"/>
<circle cx="952" cy="371" r="11" fill="#74c64e"/>
<circle cx="1028" cy="260" r="6" fill="#52ac3a"/>
<circle cx="1060" cy="237" r="7" fill="#62bc44"/>
<circle cx="1052" cy="398" r="5" fill="#44a032"/>
<circle cx="923" cy="389" r="9" fill="#2a7424"/>
<circle cx="1026" cy="81" r="12" fill="#348a2a"/>
<circle cx="1016" cy="73" r="10" fill="#74c64e"/>
<circle cx="973" cy="389" r="11" fill="#52ac3a"/>
<circle cx="945" cy="113" r="10" fill="#62bc44"/>
<circle cx="981" cy="298" r="8" fill="#52ac3a"/>
<circle cx="1042" cy="496" r="12" fill="#2a7424"/>
<circle cx="1031" cy="350" r="6" fill="#52ac3a"/>
<circle cx="1029" cy="128" r="11" fill="#52ac3a"/>
<circle cx="987" cy="344" r="11" fill="#52ac3a"/>
<circle cx="942" cy="210" r="8" fill="#74c64e"/>
<circle cx="1077" cy="172" r="10" fill="#44a032"/>
<circle cx="1001" cy="422" r="8" fill="#44a032"/>
<circle cx="944" cy="369" r="6" fill="#2a7424"/>
<circle cx="1058" cy="402" r="8" fill="#74c64e"/>
<circle cx="994" cy="370" r="8" fill="#62bc44"/>
<circle cx="956" cy="203" r="10" fill="#3f9a30"/>
<circle cx="960" cy="103" r="11" fill="#74c64e"/>
<circle cx="957" cy="179" r="11" fill="#52ac3a"/>
<circle cx="1012" cy="568" r="11" fill="#44a032"/>
<circle cx="982" cy="130" r="6" fill="#52ac3a"/>
<circle cx="1033" cy="325" r="6" fill="#2a7424"/>
<circle cx="1014" cy="351" r="7" fill="#62bc44"/>
<circle cx="977" cy="224" r="7" fill="#62bc44"/>
<circle cx="953" cy="172" r="9" fill="#2a7424"/>
<circle cx="1016" cy="529" r="11" fill="#2a7424"/>
<circle cx="1040" cy="218" r="11" fill="#4aa236"/>
<circle cx="934" cy="253" r="6" fill="#4aa236"/>
<circle cx="1031" cy="216" r="9" fill="#4aa236"/>
<circle cx="999" cy="209" r="7" fill="#4aa236"/>
<circle cx="1079" cy="148" r="8" fill="#62bc44"/>
<circle cx="1021" cy="347" r="10" fill="#4aa236"/>
<circle cx="968" cy="288" r="10" fill="#348a2a"/>
<circle cx="999" cy="420" r="7" fill="#348a2a"/>
<circle cx="1079" cy="328" r="9" fill="#2a7424"/>
<circle cx="1069" cy="108" r="9" fill="#52ac3a"/>
<circle cx="968" cy="71" r="12" fill="#52ac3a"/>
<circle cx="949" cy="257" r="7" fill="#62bc44"/>
<circle cx="926" cy="410" r="5" fill="#3f9a30"/>
<circle cx="987" cy="143" r="11" fill="#52ac3a"/>
<circle cx="991" cy="417" r="6" fill="#2a7424"/>
<circle cx="1022" cy="542" r="11" fill="#52ac3a"/>
<circle cx="988" cy="318" r="6" fill="#44a032"/>
<circle cx="1071" cy="115" r="11" fill="#4aa236"/>
<circle cx="1078" cy="568" r="12" fill="#62bc44"/>
<circle cx="1064" cy="547" r="5" fill="#44a032"/>
<circle cx="1053" cy="578" r="9" fill="#2a7424"/>
<circle cx="1077" cy="114" r="9" fill="#3f9a30"/>
<circle cx="934" cy="222" r="7" fill="#3f9a30"/>
<circle cx="987" cy="146" r="6" fill="#52ac3a"/>
<circle cx="915" cy="105" r="11" fill="#74c64e"/>
<circle cx="1060" cy="278" r="7" fill="#2a7424"/>
<circle cx="957" cy="94" r="8" fill="#2a7424"/>
<circle cx="1006" cy="249" r="10" fill="#74c64e"/>
<circle cx="946" cy="146" r="7" fill="#44a032"/>
<circle cx="947" cy="416" r="9" fill="#4aa236"/>
<circle cx="1015" cy="81" r="7" fill="#52ac3a"/>
</g>
<g filter="url(#b5)">
<path d="M520 350 C600 342 700 338 835 338 C860 328 910 322 950 340 C1000 365 1045 420 1065 480 C1075 520 1085 545 1089 560 V598 L1040 600 L960 612 L900 626 L850 630 L780 622 L700 622 L600 632 L520 640 L525 560 L565 490 L588 410 Z" fill="url(#bd)"/>
<path d="M835 340 C880 325 940 330 985 365 C1030 405 1050 460 1045 510 C1040 545 1050 575 1060 598 L960 612 L925 590 C890 540 850 480 835 410 Z" fill="#d6ab7c"/>
<path d="M1045 430 C1070 470 1085 530 1089 560 V600 L1060 598 C1052 560 1050 500 1045 430 Z" fill="#b98a5c"/>
<path d="M770 470 C800 460 835 470 850 520 L870 600 L850 628 L790 620 C780 580 770 520 770 470 Z" fill="#d4a48e" opacity="0.6"/>
<path d="M840 560 L880 570 L930 605 L900 622 L855 628 Z" fill="#8a6448" opacity="0.8"/>
<path d="M655 662 C690 640 740 620 785 598 L808 608 C770 640 730 668 700 684 L662 682 Z" fill="#e0c6a2"/>
<path d="M845 628 C880 612 930 600 985 592 L1000 612 C960 628 900 640 855 645 Z" fill="#d8b88e"/>
<path d="M172 440 L240 520 L300 560 L420 560 L520 520 L570 470 L598 420 L596 520 L548 600 L482 642 L380 654 L260 644 L188 606 L162 520 Z" fill="#22170f"/>
<path d="M205 212 C215 180 245 140 280 124 C300 118 330 122 355 138 C370 118 400 106 432 112 C465 125 485 160 500 190 C530 230 570 290 588 340 C600 390 600 450 578 500 C550 540 500 560 420 566 L320 560 C280 548 240 520 210 480 C185 440 178 380 190 320 Z" fill="url(#mane)"/>
<path d="M215 208 C240 160 270 132 290 128 C320 128 340 140 355 150 C375 128 405 116 432 120 C460 135 475 160 480 180 L456 232 L380 216 L290 226 Z" fill="#c78c48"/>
<path d="M345 140 C352 130 362 126 368 130 L372 180 L350 176 Z" fill="#4a2c16"/>
<path d="M488 178 C520 215 560 270 584 326 C600 380 598 440 580 500 L555 470 C565 420 560 360 530 300 C515 260 500 220 488 178 Z" fill="#6a4628"/>
<path d="M196 470 L250 527 L320 560 L420 566 L516 552 L560 510 L520 480 L420 500 L320 495 L240 460 Z" fill="#94703e"/>
<g fill="none" stroke-linecap="round" filter="url(#b2)">
<path d="M302 486 Q298 509 293 533" stroke="#8a5a28" stroke-width="4.3"/>
<path d="M364 176 Q363 173 366 170" stroke="#8a5a28" stroke-width="5.4"/>
<path d="M546 202 Q562 200 566 198" stroke="#a06a34" stroke-width="5.4"/>
<path d="M393 166 Q387 164 398 162" stroke="#a06a34" stroke-width="7.9"/>
<path d="M459 261 Q474 268 472 276" stroke="#d6a460" stroke-width="4.6"/>
<path d="M412 549 Q409 577 421 606" stroke="#b07a3e" stroke-width="4.5"/>
<path d="M403 176 Q409 174 408 171" stroke="#a06a34" stroke-width="7.5"/>
<path d="M198 378 Q199 386 181 394" stroke="#c99550" stroke-width="6.9"/>
<path d="M292 205 Q288 203 283 202" stroke="#b07a3e" stroke-width="6.2"/>
<path d="M478 404 Q485 414 492 424" stroke="#a06a34" stroke-width="4.6"/>
<path d="M264 498 Q258 517 253 537" stroke="#7a5026" stroke-width="6.4"/>
<path d="M449 182 Q445 186 460 190" stroke="#a06a34" stroke-width="7.1"/>
<path d="M424 455 Q423 472 440 490" stroke="#c99550" stroke-width="5.7"/>
<path d="M534 283 Q532 284 550 284" stroke="#b07a3e" stroke-width="5.2"/>
<path d="M496 370 Q504 380 523 390" stroke="#d6a460" stroke-width="7.0"/>
<path d="M420 453 Q428 474 434 494" stroke="#d6a460" stroke-width="5.8"/>
<path d="M243 531 Q231 552 233 572" stroke="#a06a34" stroke-width="6.0"/>
<path d="M503 315 Q513 323 522 332" stroke="#8a5a28" stroke-width="5.6"/>
<path d="M305 172 Q298 167 297 163" stroke="#c99550" stroke-width="6.2"/>
<path d="M191 315 Q183 322 176 328" stroke="#b07a3e" stroke-width="7.4"/>
<path d="M237 275 Q230 279 218 283" stroke="#c99550" stroke-width="7.9"/>
<path d="M320 504 Q320 523 317 541" stroke="#8a5a28" stroke-width="5.6"/>
<path d="M489 368 Q503 376 516 383" stroke="#b07a3e" stroke-width="7.8"/>
<path d="M298 546 Q298 564 292 583" stroke="#8a5a28" stroke-width="6.8"/>
<path d="M208 383 Q200 392 180 401" stroke="#8a5a28" stroke-width="6.8"/>
<path d="M428 127 Q436 129 435 130" stroke="#b07a3e" stroke-width="4.2"/>
<path d="M258 179 Q259 176 242 174" stroke="#d6a460" stroke-width="6.6"/>
<path d="M530 410 Q534 426 546 442" stroke="#d6a460" stroke-width="4.7"/>
<path d="M282 129 Q281 121 270 113" stroke="#8a5a28" stroke-width="6.7"/>
<path d="M200 398 Q191 412 179 427" stroke="#c99550" stroke-width="7.8"/>
<path d="M240 190 Q241 187 225 184" stroke="#c99550" stroke-width="6.0"/>
<path d="M496 310 Q510 312 524 314" stroke="#8a5a28" stroke-width="5.3"/>
<path d="M332 476 Q326 500 328 523" stroke="#c99550" stroke-width="7.7"/>
<path d="M481 246 Q501 245 511 245" stroke="#d6a460" stroke-width="5.3"/>
<path d="M320 513 Q318 528 315 544" stroke="#a06a34" stroke-width="5.9"/>
<path d="M347 175 Q345 174 346 173" stroke="#8a5a28" stroke-width="5.6"/>
<path d="M231 530 Q226 550 220 570" stroke="#a06a34" stroke-width="4.9"/>
<path d="M533 226 Q547 221 563 216" stroke="#d6a460" stroke-width="6.7"/>
<path d="M366 140 Q369 138 368 136" stroke="#b07a3e" stroke-width="5.7"/>
<path d="M447 548 Q458 565 458 582" stroke="#b07a3e" stroke-width="6.3"/>
<path d="M489 268 Q503 264 518 261" stroke="#c99550" stroke-width="5.7"/>
<path d="M487 442 Q502 465 515 487" stroke="#c99550" stroke-width="4.0"/>
<path d="M507 153 Q514 154 525 155" stroke="#8a5a28" stroke-width="6.6"/>
<path d="M273 151 Q265 153 267 156" stroke="#8a5a28" stroke-width="6.3"/>
<path d="M219 428 Q199 446 194 465" stroke="#7a5026" stroke-width="7.8"/>
<path d="M456 184 Q456 179 472 173" stroke="#a06a34" stroke-width="5.2"/>
<path d="M391 552 Q401 571 396 591" stroke="#d6a460" stroke-width="4.8"/>
<path d="M336 479 Q331 498 333 517" stroke="#d6a460" stroke-width="6.5"/>
<path d="M222 415 Q211 431 195 446" stroke="#d6a460" stroke-width="6.2"/>
<path d="M247 158 Q248 158 233 157" stroke="#d6a460" stroke-width="4.3"/>
<path d="M373 481 Q374 503 377 525" stroke="#a06a34" stroke-width="4.9"/>
<path d="M296 516 Q291 533 291 549" stroke="#a06a34" stroke-width="6.8"/>
<path d="M517 348 Q530 355 548 362" stroke="#7a5026" stroke-width="7.5"/>
<path d="M283 555 Q280 576 273 598" stroke="#d6a460" stroke-width="7.3"/>
<path d="M437 184 Q449 182 451 180" stroke="#b07a3e" stroke-width="6.3"/>
<path d="M350 537 Q343 559 350 580" stroke="#c99550" stroke-width="7.1"/>
<path d="M261 517 Q250 538 246 559" stroke="#7a5026" stroke-width="7.8"/>
<path d="M249 536 Q237 557 234 579" stroke="#d6a460" stroke-width="7.2"/>
<path d="M233 399 Q222 413 209 426" stroke="#7a5026" stroke-width="5.8"/>
<path d="M502 353 Q510 357 526 362" stroke="#c99550" stroke-width="6.8"/>
<path d="M275 124 Q272 118 266 113" stroke="#b07a3e" stroke-width="6.1"/>
<path d="M193 288 Q189 295 170 303" stroke="#a06a34" stroke-width="7.7"/>
<path d="M352 477 Q357 489 352 501" stroke="#c99550" stroke-width="5.1"/>
<path d="M559 369 Q572 376 591 384" stroke="#a06a34" stroke-width="5.3"/>
<path d="M464 159 Q464 165 472 170" stroke="#7a5026" stroke-width="6.0"/>
<path d="M238 477 Q238 493 220 509" stroke="#a06a34" stroke-width="5.4"/>
<path d="M196 395 Q187 412 166 430" stroke="#a06a34" stroke-width="5.9"/>
<path d="M227 228 Q214 225 202 221" stroke="#8a5a28" stroke-width="4.2"/>
<path d="M471 158 Q470 155 489 152" stroke="#7a5026" stroke-width="5.3"/>
<path d="M195 472 Q180 492 177 511" stroke="#7a5026" stroke-width="5.1"/>
<path d="M254 151 Q243 149 243 147" stroke="#b07a3e" stroke-width="4.1"/>
<path d="M488 256 Q496 259 501 261" stroke="#d6a460" stroke-width="5.1"/>
<path d="M514 476 Q524 492 532 507" stroke="#b07a3e" stroke-width="7.5"/>
<path d="M497 173 Q504 174 514 175" stroke="#8a5a28" stroke-width="5.6"/>
<path d="M406 141 Q413 135 412 129" stroke="#7a5026" stroke-width="6.8"/>
<path d="M346 152 Q356 148 345 144" stroke="#7a5026" stroke-width="7.7"/>
<path d="M418 214 Q421 218 428 221" stroke="#7a5026" stroke-width="6.2"/>
<path d="M499 369 Q520 383 521 398" stroke="#7a5026" stroke-width="4.1"/>
<path d="M449 467 Q467 482 466 497" stroke="#7a5026" stroke-width="7.6"/>
<path d="M201 227 Q193 232 187 238" stroke="#c99550" stroke-width="7.6"/>
<path d="M286 196 Q290 193 275 190" stroke="#b07a3e" stroke-width="7.7"/>
<path d="M261 246 Q241 248 238 250" stroke="#7a5026" stroke-width="7.0"/>
<path d="M239 535 Q226 550 225 565" stroke="#a06a34" stroke-width="4.8"/>
<path d="M394 185 Q402 182 399 179" stroke="#a06a34" stroke-width="4.6"/>
<path d="M441 485 Q458 505 459 526" stroke="#b07a3e" stroke-width="7.0"/>
<path d="M296 456 Q289 472 289 489" stroke="#7a5026" stroke-width="7.5"/>
<path d="M262 188 Q263 183 246 177" stroke="#a06a34" stroke-width="5.0"/>
<path d="M312 558 Q313 576 307 593" stroke="#8a5a28" stroke-width="5.5"/>
<path d="M530 250 Q540 256 546 261" stroke="#a06a34" stroke-width="5.5"/>
<path d="M317 151 Q307 150 313 150" stroke="#d6a460" stroke-width="5.0"/>
<path d="M470 442 Q474 460 491 477" stroke="#d6a460" stroke-width="6.4"/>
<path d="M472 255 Q485 256 494 257" stroke="#a06a34" stroke-width="5.0"/>
<path d="M426 525 Q422 544 432 563" stroke="#c99550" stroke-width="5.5"/>
<path d="M378 504 Q384 520 381 535" stroke="#b07a3e" stroke-width="4.2"/>
<path d="M414 203 Q413 197 422 192" stroke="#c99550" stroke-width="6.6"/>
<path d="M474 495 Q481 508 485 521" stroke="#c99550" stroke-width="4.9"/>
<path d="M424 491 Q423 505 435 519" stroke="#7a5026" stroke-width="4.7"/>
<path d="M195 293 Q178 299 177 305" stroke="#7a5026" stroke-width="4.0"/>
<path d="M271 555 Q267 572 266 590" stroke="#c99550" stroke-width="7.2"/>
<path d="M443 202 Q447 203 455 203" stroke="#8a5a28" stroke-width="6.8"/>
<path d="M215 479 Q199 495 191 510" stroke="#b07a3e" stroke-width="5.0"/>
<path d="M483 327 Q496 336 513 345" stroke="#a06a34" stroke-width="7.4"/>
<path d="M365 192 Q364 184 368 176" stroke="#a06a34" stroke-width="6.4"/>
<path d="M563 271 Q583 279 590 287" stroke="#8a5a28" stroke-width="6.6"/>
<path d="M484 295 Q501 300 506 305" stroke="#8a5a28" stroke-width="6.6"/>
<path d="M410 558 Q420 575 416 591" stroke="#a06a34" stroke-width="7.9"/>
<path d="M339 498 Q332 517 337 536" stroke="#b07a3e" stroke-width="6.2"/>
<path d="M281 469 Q271 494 264 518" stroke="#c99550" stroke-width="7.7"/>
<path d="M396 191 Q399 187 404 182" stroke="#a06a34" stroke-width="5.3"/>
<path d="M229 427 Q219 444 204 460" stroke="#a06a34" stroke-width="7.7"/>
<path d="M226 134 Q212 135 216 136" stroke="#a06a34" stroke-width="5.7"/>
<path d="M434 522 Q430 544 445 565" stroke="#a06a34" stroke-width="4.4"/>
<path d="M518 370 Q533 383 550 396" stroke="#7a5026" stroke-width="7.3"/>
<path d="M470 282 Q474 284 496 286" stroke="#c99550" stroke-width="4.6"/>
<path d="M516 403 Q533 415 533 427" stroke="#b07a3e" stroke-width="5.5"/>
</g>
<ellipse cx="250" cy="218" rx="42" ry="36" fill="#c98a48"/>
<ellipse cx="258" cy="226" rx="22" ry="19" fill="#7a4520"/>
<ellipse cx="460" cy="222" rx="36" ry="34" fill="#c98a48"/>
<ellipse cx="452" cy="230" rx="19" ry="18" fill="#7a4520"/>
<path d="M262 235 L330 215 L420 222 L480 245 L505 320 L497 400 L455 445 L390 470 L315 470 L270 425 L252 330 Z" fill="#c4935c"/>
<path d="M300 255 L400 252 L425 330 L412 420 L350 445 L290 420 L278 330 Z" fill="#d2a56c"/>
<path d="M82 722 C110 700 140 665 170 635 C195 610 225 595 270 595 L290 615 C260 640 235 670 215 700 L198 735 L120 748 Z" fill="#dab890"/>
<path d="M205 702 C240 680 300 660 360 640 C420 620 470 605 520 598 L560 610 L550 640 C500 655 450 670 400 690 C350 705 310 722 270 738 L212 736 Z" fill="#dcbb92"/>
</g>
<g filter="url(#b2)">
<ellipse cx="481" cy="785" rx="10" ry="7" fill="#62c84e"/>
<ellipse cx="1044" cy="758" rx="7" ry="5" fill="#2a842e"/>
<ellipse cx="551" cy="774" rx="9" ry="6" fill="#3cb040"/>
<ellipse cx="1012" cy="748" rx="13" ry="9" fill="#46b03e"/>
<ellipse cx="656" cy="766" rx="10" ry="7" fill="#3aa63a"/>
<ellipse cx="993" cy="758" rx="6" ry="4" fill="#5cc24a"/>
<ellipse cx="148" cy="793" rx="12" ry="8" fill="#46b03e"/>
<ellipse cx="1068" cy="661" rx="6" ry="4" fill="#5cc24a"/>
<ellipse cx="602" cy="812" rx="9" ry="6" fill="#4ab840"/>
<ellipse cx="981" cy="772" rx="8" ry="5" fill="#34a034"/>
<ellipse cx="455" cy="768" rx="14" ry="10" fill="#4ab840"/>
<ellipse cx="1006" cy="806" rx="11" ry="8" fill="#78d05a"/>
<ellipse cx="66" cy="690" rx="13" ry="9" fill="#34a034"/>
<ellipse cx="889" cy="652" rx="13" ry="9" fill="#62c84e"/>
<ellipse cx="1035" cy="788" rx="8" ry="6" fill="#62c84e"/>
<ellipse cx="563" cy="790" rx="11" ry="8" fill="#3aa63a"/>
<ellipse cx="827" cy="673" rx="9" ry="7" fill="#2f9232"/>
<ellipse cx="900" cy="708" rx="11" ry="8" fill="#78d05a"/>
<ellipse cx="1066" cy="780" rx="12" ry="9" fill="#4ab840"/>
<ellipse cx="922" cy="774" rx="11" ry="8" fill="#3aa63a"/>
<ellipse cx="110" cy="773" rx="13" ry="9" fill="#3aa63a"/>
<ellipse cx="762" cy="813" rx="10" ry="7" fill="#46b03e"/>
<ellipse cx="582" cy="769" rx="10" ry="7" fill="#46b03e"/>
<ellipse cx="956" cy="677" rx="10" ry="7" fill="#2f9232"/>
<ellipse cx="872" cy="802" rx="12" ry="9" fill="#3aa63a"/>
<ellipse cx="696" cy="774" rx="9" ry="6" fill="#2f9232"/>
<ellipse cx="13" cy="691" rx="7" ry="5" fill="#2a842e"/>
<ellipse cx="824" cy="748" rx="7" ry="5" fill="#78d05a"/>
<ellipse cx="170" cy="815" rx="11" ry="7" fill="#3aa63a"/>
<ellipse cx="1042" cy="764" rx="11" ry="8" fill="#3cb040"/>
<ellipse cx="949" cy="775" rx="12" ry="8" fill="#2a842e"/>
<ellipse cx="620" cy="771" rx="13" ry="9" fill="#46b03e"/>
<ellipse cx="891" cy="762" rx="13" ry="9" fill="#3aa63a"/>
<ellipse cx="684" cy="732" rx="7" ry="5" fill="#78d05a"/>
<ellipse cx="291" cy="767" rx="11" ry="8" fill="#5cc24a"/>
<ellipse cx="280" cy="747" rx="7" ry="5" fill="#5cc24a"/>
<ellipse cx="1047" cy="646" rx="11" ry="8" fill="#5cc24a"/>
<ellipse cx="479" cy="753" rx="13" ry="9" fill="#3cb040"/>
<ellipse cx="1021" cy="645" rx="7" ry="5" fill="#5cc24a"/>
<ellipse cx="466" cy="798" rx="7" ry="5" fill="#34a034"/>
<ellipse cx="706" cy="756" rx="12" ry="9" fill="#4ab840"/>
<ellipse cx="846" cy="772" rx="10" ry="7" fill="#78d05a"/>
<ellipse cx="1058" cy="751" rx="7" ry="5" fill="#62c84e"/>
<ellipse cx="35" cy="617" rx="9" ry="7" fill="#2f9232"/>
<ellipse cx="643" cy="782" rx="9" ry="6" fill="#5cc24a"/>
<ellipse cx="484" cy="766" rx="7" ry="5" fill="#46b03e"/>
<ellipse cx="109" cy="810" rx="13" ry="9" fill="#46b03e"/>
<ellipse cx="1002" cy="730" rx="14" ry="10" fill="#46b03e"/>
<ellipse cx="186" cy="815" rx="8" ry="5" fill="#2f9232"/>
<ellipse cx="481" cy="782" rx="11" ry="8" fill="#2f9232"/>
<ellipse cx="322" cy="798" rx="12" ry="9" fill="#4ab840"/>
<ellipse cx="1026" cy="729" rx="13" ry="9" fill="#46b03e"/>
<ellipse cx="544" cy="768" rx="8" ry="6" fill="#3aa63a"/>
<ellipse cx="18" cy="746" rx="9" ry="6" fill="#3cb040"/>
<ellipse cx="259" cy="774" rx="11" ry="8" fill="#34a034"/>
<ellipse cx="110" cy="770" rx="10" ry="7" fill="#3cb040"/>
<ellipse cx="1055" cy="751" rx="12" ry="9" fill="#5cc24a"/>
<ellipse cx="734" cy="700" rx="10" ry="7" fill="#2a842e"/>
<ellipse cx="911" cy="712" rx="14" ry="10" fill="#34a034"/>
<ellipse cx="907" cy="779" rx="10" ry="7" fill="#62c84e"/>
<ellipse cx="821" cy="706" rx="12" ry="8" fill="#3aa63a"/>
<ellipse cx="893" cy="694" rx="9" ry="6" fill="#4ab840"/>
<ellipse cx="957" cy="769" rx="8" ry="6" fill="#46b03e"/>
<ellipse cx="1013" cy="728" rx="12" ry="8" fill="#46b03e"/>
<ellipse cx="36" cy="704" rx="9" ry="6" fill="#46b03e"/>
<ellipse cx="504" cy="775" rx="7" ry="5" fill="#62c84e"/>
<ellipse cx="649" cy="804" rx="13" ry="9" fill="#62c84e"/>
<ellipse cx="1080" cy="668" rx="6" ry="4" fill="#46b03e"/>
<ellipse cx="1015" cy="815" rx="14" ry="10" fill="#34a034"/>
<ellipse cx="952" cy="719" rx="10" ry="7" fill="#3aa63a"/>
<ellipse cx="1058" cy="756" rx="10" ry="7" fill="#78d05a"/>
<ellipse cx="836" cy="711" rx="8" ry="6" fill="#62c84e"/>
<ellipse cx="656" cy="752" rx="12" ry="8" fill="#5cc24a"/>
<ellipse cx="160" cy="811" rx="8" ry="5" fill="#2f9232"/>
<ellipse cx="41" cy="752" rx="9" ry="6" fill="#78d05a"/>
<ellipse cx="797" cy="781" rx="13" ry="9" fill="#34a034"/>
<ellipse cx="637" cy="749" rx="13" ry="9" fill="#2f9232"/>
<ellipse cx="724" cy="751" rx="9" ry="6" fill="#46b03e"/>
<ellipse cx="829" cy="682" rx="12" ry="8" fill="#4ab840"/>
<ellipse cx="491" cy="748" rx="10" ry="7" fill="#46b03e"/>
<ellipse cx="170" cy="814" rx="13" ry="9" fill="#2f9232"/>
<ellipse cx="149" cy="810" rx="13" ry="9" fill="#2a842e"/>
<ellipse cx="994" cy="747" rx="6" ry="4" fill="#2a842e"/>
<ellipse cx="1077" cy="784" rx="10" ry="7" fill="#34a034"/>
<ellipse cx="727" cy="732" rx="12" ry="9" fill="#3cb040"/>
<ellipse cx="669" cy="739" rx="13" ry="9" fill="#2a842e"/>
<ellipse cx="980" cy="738" rx="12" ry="8" fill="#62c84e"/>
<ellipse cx="1081" cy="686" rx="8" ry="6" fill="#46b03e"/>
<ellipse cx="627" cy="761" rx="12" ry="8" fill="#46b03e"/>
<ellipse cx="873" cy="674" rx="14" ry="10" fill="#2f9232"/>
<ellipse cx="454" cy="749" rx="9" ry="6" fill="#62c84e"/>
<ellipse cx="666" cy="751" rx="9" ry="6" fill="#4ab840"/>
<ellipse cx="888" cy="767" rx="12" ry="8" fill="#2a842e"/>
<ellipse cx="905" cy="716" rx="11" ry="8" fill="#2a842e"/>
<ellipse cx="340" cy="809" rx="6" ry="5" fill="#3cb040"/>
<ellipse cx="724" cy="796" rx="14" ry="10" fill="#3aa63a"/>
<ellipse cx="982" cy="678" rx="11" ry="8" fill="#46b03e"/>
<ellipse cx="786" cy="727" rx="13" ry="9" fill="#5cc24a"/>
<ellipse cx="66" cy="792" rx="13" ry="9" fill="#3cb040"/>
<ellipse cx="934" cy="707" rx="10" ry="7" fill="#3aa63a"/>
<ellipse cx="43" cy="714" rx="13" ry="9" fill="#46b03e"/>
<ellipse cx="451" cy="756" rx="13" ry="9" fill="#5cc24a"/>
<ellipse cx="968" cy="676" rx="12" ry="9" fill="#78d05a"/>
<ellipse cx="223" cy="799" rx="7" ry="5" fill="#46b03e"/>
<ellipse cx="819" cy="813" rx="11" ry="7" fill="#34a034"/>
<ellipse cx="515" cy="797" rx="12" ry="8" fill="#78d05a"/>
<ellipse cx="677" cy="807" rx="8" ry="6" fill="#2f9232"/>
<ellipse cx="597" cy="791" rx="8" ry="6" fill="#2f9232"/>
<ellipse cx="32" cy="732" rx="13" ry="9" fill="#34a034"/>
<ellipse cx="351" cy="785" rx="12" ry="9" fill="#2f9232"/>
<ellipse cx="1053" cy="799" rx="13" ry="9" fill="#62c84e"/>
<ellipse cx="537" cy="778" rx="13" ry="9" fill="#2f9232"/>
<ellipse cx="73" cy="664" rx="6" ry="4" fill="#78d05a"/>
<ellipse cx="945" cy="788" rx="6" ry="4" fill="#4ab840"/>
<ellipse cx="260" cy="785" rx="8" ry="5" fill="#78d05a"/>
<ellipse cx="481" cy="775" rx="8" ry="6" fill="#46b03e"/>
<ellipse cx="778" cy="806" rx="12" ry="8" fill="#2f9232"/>
<ellipse cx="926" cy="648" rx="14" ry="10" fill="#62c84e"/>
<ellipse cx="756" cy="690" rx="6" ry="4" fill="#46b03e"/>
<ellipse cx="56" cy="737" rx="10" ry="7" fill="#4ab840"/>
<ellipse cx="1069" cy="651" rx="7" ry="5" fill="#3cb040"/>
<ellipse cx="1026" cy="645" rx="6" ry="4" fill="#5cc24a"/>
<ellipse cx="923" cy="781" rx="9" ry="7" fill="#34a034"/>
<ellipse cx="872" cy="779" rx="7" ry="5" fill="#3aa63a"/>
<ellipse cx="174" cy="793" rx="11" ry="8" fill="#5cc24a"/>
<ellipse cx="909" cy="780" rx="12" ry="9" fill="#2f9232"/>
<ellipse cx="298" cy="767" rx="14" ry="10" fill="#3aa63a"/>
<ellipse cx="824" cy="792" rx="13" ry="9" fill="#3aa63a"/>
<ellipse cx="1076" cy="793" rx="11" ry="7" fill="#2a842e"/>
<ellipse cx="71" cy="700" rx="7" ry="5" fill="#4ab840"/>
<ellipse cx="550" cy="773" rx="14" ry="10" fill="#46b03e"/>
<ellipse cx="68" cy="626" rx="7" ry="5" fill="#4ab840"/>
<ellipse cx="485" cy="748" rx="13" ry="9" fill="#2a842e"/>
<ellipse cx="919" cy="805" rx="11" ry="8" fill="#3aa63a"/>
<ellipse cx="375" cy="783" rx="10" ry="7" fill="#3cb040"/>
<ellipse cx="31" cy="775" rx="13" ry="9" fill="#5cc24a"/>
<ellipse cx="218" cy="812" rx="10" ry="7" fill="#2a842e"/>
<ellipse cx="215" cy="761" rx="12" ry="9" fill="#2f9232"/>
<ellipse cx="971" cy="675" rx="14" ry="10" fill="#2a842e"/>
<ellipse cx="29" cy="773" rx="6" ry="4" fill="#46b03e"/>
<ellipse cx="840" cy="726" rx="8" ry="6" fill="#46b03e"/>
<ellipse cx="109" cy="769" rx="7" ry="5" fill="#3cb040"/>
<ellipse cx="1016" cy="780" rx="13" ry="9" fill="#5cc24a"/>
<ellipse cx="657" cy="803" rx="11" ry="8" fill="#2a842e"/>
<ellipse cx="1078" cy="685" rx="7" ry="5" fill="#2f9232"/>
<ellipse cx="877" cy="664" rx="13" ry="9" fill="#62c84e"/>
<ellipse cx="38" cy="637" rx="12" ry="9" fill="#2a842e"/>
<ellipse cx="479" cy="792" rx="14" ry="10" fill="#3aa63a"/>
<ellipse cx="23" cy="686" rx="13" ry="9" fill="#3cb040"/>
<ellipse cx="194" cy="771" rx="7" ry="5" fill="#2f9232"/>
<ellipse cx="743" cy="779" rx="6" ry="4" fill="#46b03e"/>
<ellipse cx="195" cy="755" rx="11" ry="7" fill="#2a842e"/>
<ellipse cx="866" cy="770" rx="10" ry="7" fill="#5cc24a"/>
<ellipse cx="799" cy="727" rx="14" ry="10" fill="#2a842e"/>
<ellipse cx="293" cy="764" rx="8" ry="5" fill="#3aa63a"/>
<ellipse cx="800" cy="756" rx="7" ry="5" fill="#5cc24a"/>
<ellipse cx="1069" cy="708" rx="14" ry="10" fill="#2a842e"/>
<ellipse cx="820" cy="785" rx="8" ry="5" fill="#4ab840"/>
<ellipse cx="1081" cy="706" rx="13" ry="9" fill="#62c84e"/>
<ellipse cx="394" cy="784" rx="8" ry="6" fill="#62c84e"/>
<ellipse cx="766" cy="693" rx="14" ry="10" fill="#3cb040"/>
<ellipse cx="811" cy="685" rx="11" ry="8" fill="#3aa63a"/>
<ellipse cx="180" cy="793" rx="7" ry="5" fill="#5cc24a"/>
<ellipse cx="1064" cy="797" rx="10" ry="7" fill="#3cb040"/>
<ellipse cx="1058" cy="786" rx="9" ry="6" fill="#3aa63a"/>
<ellipse cx="602" cy="772" rx="11" ry="8" fill="#78d05a"/>
<ellipse cx="205" cy="814" rx="11" ry="8" fill="#78d05a"/>
<ellipse cx="596" cy="788" rx="6" ry="4" fill="#2f9232"/>
<ellipse cx="675" cy="703" rx="12" ry="9" fill="#5cc24a"/>
<ellipse cx="258" cy="812" rx="10" ry="7" fill="#78d05a"/>
<ellipse cx="1075" cy="708" rx="14" ry="10" fill="#2a842e"/>
<ellipse cx="937" cy="657" rx="13" ry="9" fill="#3cb040"/>
<ellipse cx="157" cy="798" rx="9" ry="7" fill="#2f9232"/>
<ellipse cx="1035" cy="761" rx="7" ry="5" fill="#46b03e"/>
<ellipse cx="17" cy="611" rx="13" ry="9" fill="#3aa63a"/>
<ellipse cx="1056" cy="771" rx="13" ry="9" fill="#46b03e"/>
<ellipse cx="58" cy="668" rx="10" ry="7" fill="#2a842e"/>
<ellipse cx="706" cy="785" rx="11" ry="8" fill="#34a034"/>
<ellipse cx="120" cy="801" rx="10" ry="7" fill="#2f9232"/>
<ellipse cx="172" cy="763" rx="10" ry="7" fill="#2f9232"/>
<ellipse cx="550" cy="749" rx="8" ry="5" fill="#2a842e"/>
<ellipse cx="287" cy="791" rx="6" ry="4" fill="#2f9232"/>
<ellipse cx="1085" cy="699" rx="10" ry="7" fill="#5cc24a"/>
<ellipse cx="274" cy="761" rx="14" ry="10" fill="#34a034"/>
<ellipse cx="32" cy="794" rx="12" ry="9" fill="#2a842e"/>
<ellipse cx="740" cy="816" rx="11" ry="8" fill="#3cb040"/>
<ellipse cx="817" cy="693" rx="10" ry="7" fill="#34a034"/>
</g>
<g filter="url(#b2)">
<ellipse cx="352" cy="452" rx="46" ry="20" fill="#efe9de"/>
</g><g filter="url(#b3)">
<ellipse cx="138" cy="724" rx="52" ry="19" transform="rotate(-8 138 724)" fill="#e8dccb"/>
<ellipse cx="268" cy="714" rx="52" ry="19" transform="rotate(-10 268 714)" fill="#e6d9c6"/>
</g>
<g filter="url(#b3)">
<path d="M330 260 L372 260 L382 370 L320 370 Z" fill="#d8ad78" opacity="0.7"/>
<ellipse cx="298" cy="292" rx="22" ry="12" fill="#9a6a3c" opacity="0.6"/>
<ellipse cx="404" cy="292" rx="22" ry="12" fill="#9a6a3c" opacity="0.6"/>
<path d="M300 400 C320 390 340 395 350 405 C360 395 385 390 405 400 L400 430 L300 430 Z" fill="#d9b080"/>
</g>
<g filter="url(#b2)">
<ellipse cx="299" cy="292" rx="20" ry="10" fill="#e2c69a"/>
<ellipse cx="403" cy="292" rx="20" ry="10" fill="#e2c69a"/>
<ellipse cx="299" cy="289" rx="14" ry="7" fill="#3a2410"/>
<ellipse cx="403" cy="289" rx="14" ry="7" fill="#3a2410"/>
<path d="M315 372 Q348 364 382 372 L352 406 Z" fill="#1b1210"/>
<path d="M350 406 V430 M320 440 Q350 425 380 440" stroke="#3a2a20" stroke-width="4" fill="none"/>
</g>
</g></svg>
<div style="position:absolute;left:759px;top:765.3px;width:28.6px;height:31.4px;background:#4b5563;border:1px solid #5a6270;box-sizing:border-box;border-radius:6px;"></div>
<div style="position:absolute;left:793px;top:765.3px;width:28.6px;height:31.4px;background:#4b5563;border:1px solid #5a6270;box-sizing:border-box;border-radius:6px;"></div>
<div style="position:absolute;left:827px;top:765.3px;width:28.6px;height:31.4px;background:#4b5563;border:1px solid #5a6270;box-sizing:border-box;border-radius:6px;"></div>
<div style="position:absolute;left:861.2px;top:765.3px;width:28.6px;height:31.4px;background:#4b5563;border:1px solid #5a6270;box-sizing:border-box;border-radius:6px;"></div>
<div style="position:absolute;left:895.8px;top:765.3px;width:28.6px;height:31.4px;background:#4b5563;border:1px solid #5a6270;box-sizing:border-box;border-radius:6px;"></div>
<svg style="position:absolute;left:766px;top:773px;" width="15" height="15" viewBox="0 0 15 15"><rect x="2" y="1" width="11" height="13" fill="#f5f5f5"/><rect x="3.5" y="1" width="7" height="5" fill="#3f2f6e"/><rect x="6.5" y="1.8" width="3" height="3" fill="#fff"/><rect x="3" y="8.5" width="9" height="4.5" fill="#f9d2d8"/><path d="M3 10 H12 M3 11.5 H12" stroke="#e88" stroke-width="0.5"/></svg>
<svg style="position:absolute;left:800px;top:773px;" width="15" height="15" viewBox="0 0 15 15"><rect x="1.5" y="2" width="12" height="7" fill="#f2c230"/><rect x="3" y="3.5" width="9" height="3" fill="#f8e08a"/><path d="M1.5 9 H13.5 L7.5 13 Z" fill="#6c3fa0"/><rect x="5" y="9.8" width="5" height="1.5" fill="#fff"/></svg>
<svg style="position:absolute;left:834px;top:773px;" width="15" height="15" viewBox="0 0 15 15"><rect x="1" y="1.5" width="13" height="12" fill="#c8a24a"/><rect x="2.5" y="3" width="10" height="9" fill="#7cc4e8"/><path d="M2.5 12 L6 7 L8.5 9.5 L10.5 8 L12.5 12 Z" fill="#3aa35a"/><circle cx="9.8" cy="5.2" r="1.2" fill="#f5d442"/></svg>
<svg style="position:absolute;left:868px;top:772px;" width="16" height="16" viewBox="0 0 16 16"><path d="M8 1.5 C12.5 1.5 15 4.5 15 7.5 C15 10 13 10.5 11.5 10 C10 9.5 9.5 11 10 12.5 C10.5 14 9 15 7.5 15 C3.5 15 1 12 1 8 C1 4.5 4 1.5 8 1.5 Z" fill="#f5c6c6"/><circle cx="5" cy="6" r="1.4" fill="#2e9f5e"/><circle cx="8.5" cy="4.5" r="1.4" fill="#3b82f6"/><circle cx="12" cy="6.5" r="1.4" fill="#f59e0b"/><circle cx="4.5" cy="10" r="1.4" fill="#ec4899"/></svg>
<svg style="position:absolute;left:902px;top:773px;" width="15" height="15" viewBox="0 0 15 15"><path d="M2 1.5 L2 13.5 L14 13.5 Z" fill="#d8d8d8"/><path d="M4.5 7.5 L4.5 11 L8 11 Z" fill="#5a6270"/></svg>
<div style="position:absolute;left:596.60px;top:20.42px;font-size:12.5px;line-height:12.5px;font-weight:700;color:#1c1c1c;white-space:pre;transform:scaleX(1.0000);transform-origin:0 0;">WebUI終了</div>
<div style="position:absolute;left:12.60px;top:69.97px;font-size:11.5px;line-height:11.5px;font-weight:400;color:#e5e7eb;white-space:pre;transform:scaleX(0.9443);transform-origin:0 0;-webkit-text-stroke:0.5px #e5e7eb;">Stable Diffusion checkpoint</div>
<div style="position:absolute;left:26.60px;top:94.44px;font-size:12px;line-height:12px;font-weight:400;color:#e5e7eb;white-space:pre;transform:scaleX(0.8922);transform-origin:0 0;-webkit-text-stroke:0.5px #e5e7eb;">juggernautXL_juggXIByRundiffusion.safetensor</div>
<div style="position:absolute;left:337.30px;top:69.77px;font-size:11.5px;line-height:11.5px;font-weight:400;color:#e5e7eb;white-space:pre;transform:scaleX(0.7936);transform-origin:0 0;-webkit-text-stroke:0.5px #e5e7eb;">SD VAE</div>
<div style="position:absolute;left:350.90px;top:94.54px;font-size:12px;line-height:12px;font-weight:400;color:#e5e7eb;white-space:pre;transform:scaleX(0.9277);transform-origin:0 0;-webkit-text-stroke:0.5px #e5e7eb;">Automatic</div>
<div style="position:absolute;left:680.90px;top:104.97px;font-size:11.5px;line-height:11.5px;font-weight:400;color:#e5e7eb;white-space:pre;transform:scaleX(0.9111);transform-origin:0 0;-webkit-text-stroke:0.5px #e5e7eb;">Always save all generated image grids</div>
<div style="position:absolute;left:26.60px;top:138.97px;font-size:12.2px;line-height:12.2px;font-weight:400;color:#ffffff;white-space:pre;transform:scaleX(1.0688);transform-origin:0 0;-webkit-text-stroke:0.3px #ffffff;">txt2img</div>
<div style="position:absolute;left:95.30px;top:138.97px;font-size:12.2px;line-height:12.2px;font-weight:400;color:#a3a8b1;white-space:pre;transform:scaleX(1.0594);transform-origin:0 0;-webkit-text-stroke:0.15px #a3a8b1;">img2img</div>
<div style="position:absolute;left:170.60px;top:138.97px;font-size:12.2px;line-height:12.2px;font-weight:400;color:#a3a8b1;white-space:pre;transform:scaleX(0.9639);transform-origin:0 0;-webkit-text-stroke:0.15px #a3a8b1;">Extras</div>
<div style="position:absolute;left:231.20px;top:138.97px;font-size:12.2px;line-height:12.2px;font-weight:400;color:#a3a8b1;white-space:pre;transform:scaleX(0.9536);transform-origin:0 0;-webkit-text-stroke:0.15px #a3a8b1;">PNG Info</div>
<div style="position:absolute;left:306.50px;top:138.97px;font-size:12.2px;line-height:12.2px;font-weight:400;color:#a3a8b1;white-space:pre;transform:scaleX(1.0042);transform-origin:0 0;-webkit-text-stroke:0.15px #a3a8b1;">Checkpoint Merger</div>
<div style="position:absolute;left:436.80px;top:138.97px;font-size:12.2px;line-height:12.2px;font-weight:400;color:#a3a8b1;white-space:pre;transform:scaleX(1.0173);transform-origin:0 0;-webkit-text-stroke:0.15px #a3a8b1;">Train</div>
<div style="position:absolute;left:492.20px;top:138.97px;font-size:12.2px;line-height:12.2px;font-weight:400;color:#a3a8b1;white-space:pre;transform:scaleX(1.0126);transform-origin:0 0;-webkit-text-stroke:0.15px #a3a8b1;">Settings</div>
<div style="position:absolute;left:563.60px;top:138.97px;font-size:12.2px;line-height:12.2px;font-weight:400;color:#a3a8b1;white-space:pre;transform:scaleX(0.9828);transform-origin:0 0;-webkit-text-stroke:0.15px #a3a8b1;">Extensions</div>
<div style="position:absolute;left:32.10px;top:177.87px;font-size:11.5px;line-height:11.5px;font-weight:400;color:#e5e7eb;white-space:pre;transform:scaleX(0.9350);transform-origin:0 0;-webkit-text-stroke:0.5px #e5e7eb;">A lion,  in the lush</div>
<div style="position:absolute;left:32.70px;top:258.77px;font-size:11.5px;line-height:11.5px;font-weight:400;color:#e5e7eb;white-space:pre;transform:scaleX(0.9665);transform-origin:0 0;-webkit-text-stroke:0.5px #e5e7eb;">low quality,3d,cartoon,painting,text,</div>
<div style="position:absolute;left:848.15px;top:159.29px;font-size:12px;line-height:12px;font-weight:700;color:#e5e7eb;white-space:pre;transform:scaleX(0.9332);transform-origin:0 0;">6/75</div>
<div style="position:absolute;left:841.00px;top:241.54px;font-size:12px;line-height:12px;font-weight:700;color:#e5e7eb;white-space:pre;transform:scaleX(0.9257);transform-origin:0 0;">12/75</div>
<div style="position:absolute;left:1005.60px;top:189.71px;font-size:11.8px;line-height:11.8px;font-weight:700;color:#fff6ea;white-space:pre;transform:scaleX(0.9930);transform-origin:0 0;">Generate</div>
<div style="position:absolute;left:37.40px;top:344.84px;font-size:12px;line-height:12px;font-weight:400;color:#ffffff;white-space:pre;transform:scaleX(1.0105);transform-origin:0 0;-webkit-text-stroke:0.3px #ffffff;">Generation</div>
<div style="position:absolute;left:126.00px;top:344.84px;font-size:12px;line-height:12px;font-weight:400;color:#a3a8b1;white-space:pre;transform:scaleX(1.0195);transform-origin:0 0;-webkit-text-stroke:0.15px #a3a8b1;">Textual Inversion</div>
<div style="position:absolute;left:245.60px;top:344.84px;font-size:12px;line-height:12px;font-weight:400;color:#a3a8b1;white-space:pre;transform:scaleX(1.0408);transform-origin:0 0;-webkit-text-stroke:0.15px #a3a8b1;">Hypernetworks</div>
<div style="position:absolute;left:355.90px;top:344.84px;font-size:12px;line-height:12px;font-weight:400;color:#a3a8b1;white-space:pre;transform:scaleX(1.0417);transform-origin:0 0;-webkit-text-stroke:0.15px #a3a8b1;">Checkpoints</div>
<div style="position:absolute;left:451.80px;top:344.84px;font-size:12px;line-height:12px;font-weight:400;color:#a3a8b1;white-space:pre;transform:scaleX(1.0029);transform-origin:0 0;-webkit-text-stroke:0.15px #a3a8b1;">Lora</div>
<div style="position:absolute;left:34.20px;top:383.52px;font-size:11.2px;line-height:11.2px;font-weight:400;color:#e5e7eb;white-space:pre;transform:scaleX(0.9784);transform-origin:0 0;-webkit-text-stroke:0.5px #e5e7eb;">Sampling method</div>
<div style="position:absolute;left:48.40px;top:407.92px;font-size:11.2px;line-height:11.2px;font-weight:400;color:#e5e7eb;white-space:pre;transform:scaleX(0.8884);transform-origin:0 0;-webkit-text-stroke:0.5px #e5e7eb;">DPM++ 2M Karras</div>
<div style="position:absolute;left:41.60px;top:442.79px;font-size:11px;line-height:11px;font-weight:400;color:#e5e7eb;white-space:pre;transform:scaleX(0.8976);transform-origin:0 0;-webkit-text-stroke:0.5px #e5e7eb;">Hires. fix</div>
<div style="position:absolute;left:280.00px;top:383.92px;font-size:11.2px;line-height:11.2px;font-weight:400;color:#e5e7eb;white-space:pre;transform:scaleX(0.9569);transform-origin:0 0;-webkit-text-stroke:0.5px #e5e7eb;">Sampling steps</div>
<div style="position:absolute;left:474.20px;top:384.52px;font-size:11.5px;line-height:11.5px;font-weight:400;color:#e5e7eb;white-space:pre;transform:scaleX(0.9612);transform-origin:0 0;-webkit-text-stroke:0.5px #e5e7eb;">35</div>
<div style="position:absolute;left:286.90px;top:442.29px;font-size:11px;line-height:11px;font-weight:400;color:#e5e7eb;white-space:pre;transform:scaleX(0.9248);transform-origin:0 0;-webkit-text-stroke:0.5px #e5e7eb;">Refiner</div>
<div style="position:absolute;left:33.80px;top:470.92px;font-size:11.2px;line-height:11.2px;font-weight:400;color:#e5e7eb;white-space:pre;transform:scaleX(1.0171);transform-origin:0 0;-webkit-text-stroke:0.5px #e5e7eb;">Width</div>
<div style="position:absolute;left:260.25px;top:472.92px;font-size:11.5px;line-height:11.5px;font-weight:400;color:#e5e7eb;white-space:pre;transform:scaleX(0.9104);transform-origin:0 0;-webkit-text-stroke:0.5px #e5e7eb;">1024</div>
<div style="position:absolute;left:33.80px;top:516.22px;font-size:11.2px;line-height:11.2px;font-weight:400;color:#e5e7eb;white-space:pre;transform:scaleX(1.0048);transform-origin:0 0;-webkit-text-stroke:0.5px #e5e7eb;">Height</div>
<div style="position:absolute;left:263.25px;top:517.97px;font-size:11.5px;line-height:11.5px;font-weight:400;color:#e5e7eb;white-space:pre;transform:scaleX(0.9016);transform-origin:0 0;-webkit-text-stroke:0.5px #e5e7eb;">768</div>
<div style="position:absolute;left:366.40px;top:470.72px;font-size:11.2px;line-height:11.2px;font-weight:400;color:#e5e7eb;white-space:pre;transform:scaleX(0.9730);transform-origin:0 0;-webkit-text-stroke:0.5px #e5e7eb;">Batch count</div>
<div style="position:absolute;left:477.10px;top:472.87px;font-size:11.5px;line-height:11.5px;font-weight:400;color:#e5e7eb;white-space:pre;transform:scaleX(0.9834);transform-origin:0 0;-webkit-text-stroke:0.5px #e5e7eb;">1</div>
<div style="position:absolute;left:366.40px;top:516.22px;font-size:11.2px;line-height:11.2px;font-weight:400;color:#e5e7eb;white-space:pre;transform:scaleX(0.9337);transform-origin:0 0;-webkit-text-stroke:0.5px #e5e7eb;">Batch size</div>
<div style="position:absolute;left:477.10px;top:518.02px;font-size:11.5px;line-height:11.5px;font-weight:400;color:#e5e7eb;white-space:pre;transform:scaleX(0.9834);transform-origin:0 0;-webkit-text-stroke:0.5px #e5e7eb;">1</div>
<div style="position:absolute;left:33.70px;top:557.82px;font-size:11.2px;line-height:11.2px;font-weight:400;color:#e5e7eb;white-space:pre;transform:scaleX(0.8736);transform-origin:0 0;-webkit-text-stroke:0.5px #e5e7eb;">CFG Scale</div>
<div style="position:absolute;left:476.60px;top:559.42px;font-size:11.5px;line-height:11.5px;font-weight:400;color:#e5e7eb;white-space:pre;transform:scaleX(1.0615);transform-origin:0 0;-webkit-text-stroke:0.5px #e5e7eb;">7</div>
<div style="position:absolute;left:33.70px;top:600.12px;font-size:11.2px;line-height:11.2px;font-weight:400;color:#e5e7eb;white-space:pre;transform:scaleX(0.9411);transform-origin:0 0;-webkit-text-stroke:0.5px #e5e7eb;">Seed</div>
<div style="position:absolute;left:43.00px;top:624.87px;font-size:11.5px;line-height:11.5px;font-weight:400;color:#e5e7eb;white-space:pre;transform:scaleX(0.9576);transform-origin:0 0;-webkit-text-stroke:0.5px #e5e7eb;">-1</div>
<div style="position:absolute;left:479.40px;top:627.47px;font-size:11.5px;line-height:11.5px;font-weight:400;color:#e5e7eb;white-space:pre;transform:scaleX(0.8792);transform-origin:0 0;-webkit-text-stroke:0.5px #e5e7eb;">Extra</div>
<div style="position:absolute;left:41.30px;top:664.64px;font-size:11px;line-height:11px;font-weight:400;color:#e5e7eb;white-space:pre;transform:scaleX(0.8973);transform-origin:0 0;-webkit-text-stroke:0.5px #e5e7eb;">ControlNet v1.1.455</div>
<div style="position:absolute;left:33.90px;top:690.02px;font-size:11.2px;line-height:11.2px;font-weight:400;color:#e5e7eb;white-space:pre;transform:scaleX(1.0137);transform-origin:0 0;-webkit-text-stroke:0.5px #e5e7eb;">Script</div>
<div style="position:absolute;left:47.80px;top:714.02px;font-size:11.2px;line-height:11.2px;font-weight:400;color:#e5e7eb;white-space:pre;transform:scaleX(0.9645);transform-origin:0 0;-webkit-text-stroke:0.5px #e5e7eb;">None</div>
</body></html>
